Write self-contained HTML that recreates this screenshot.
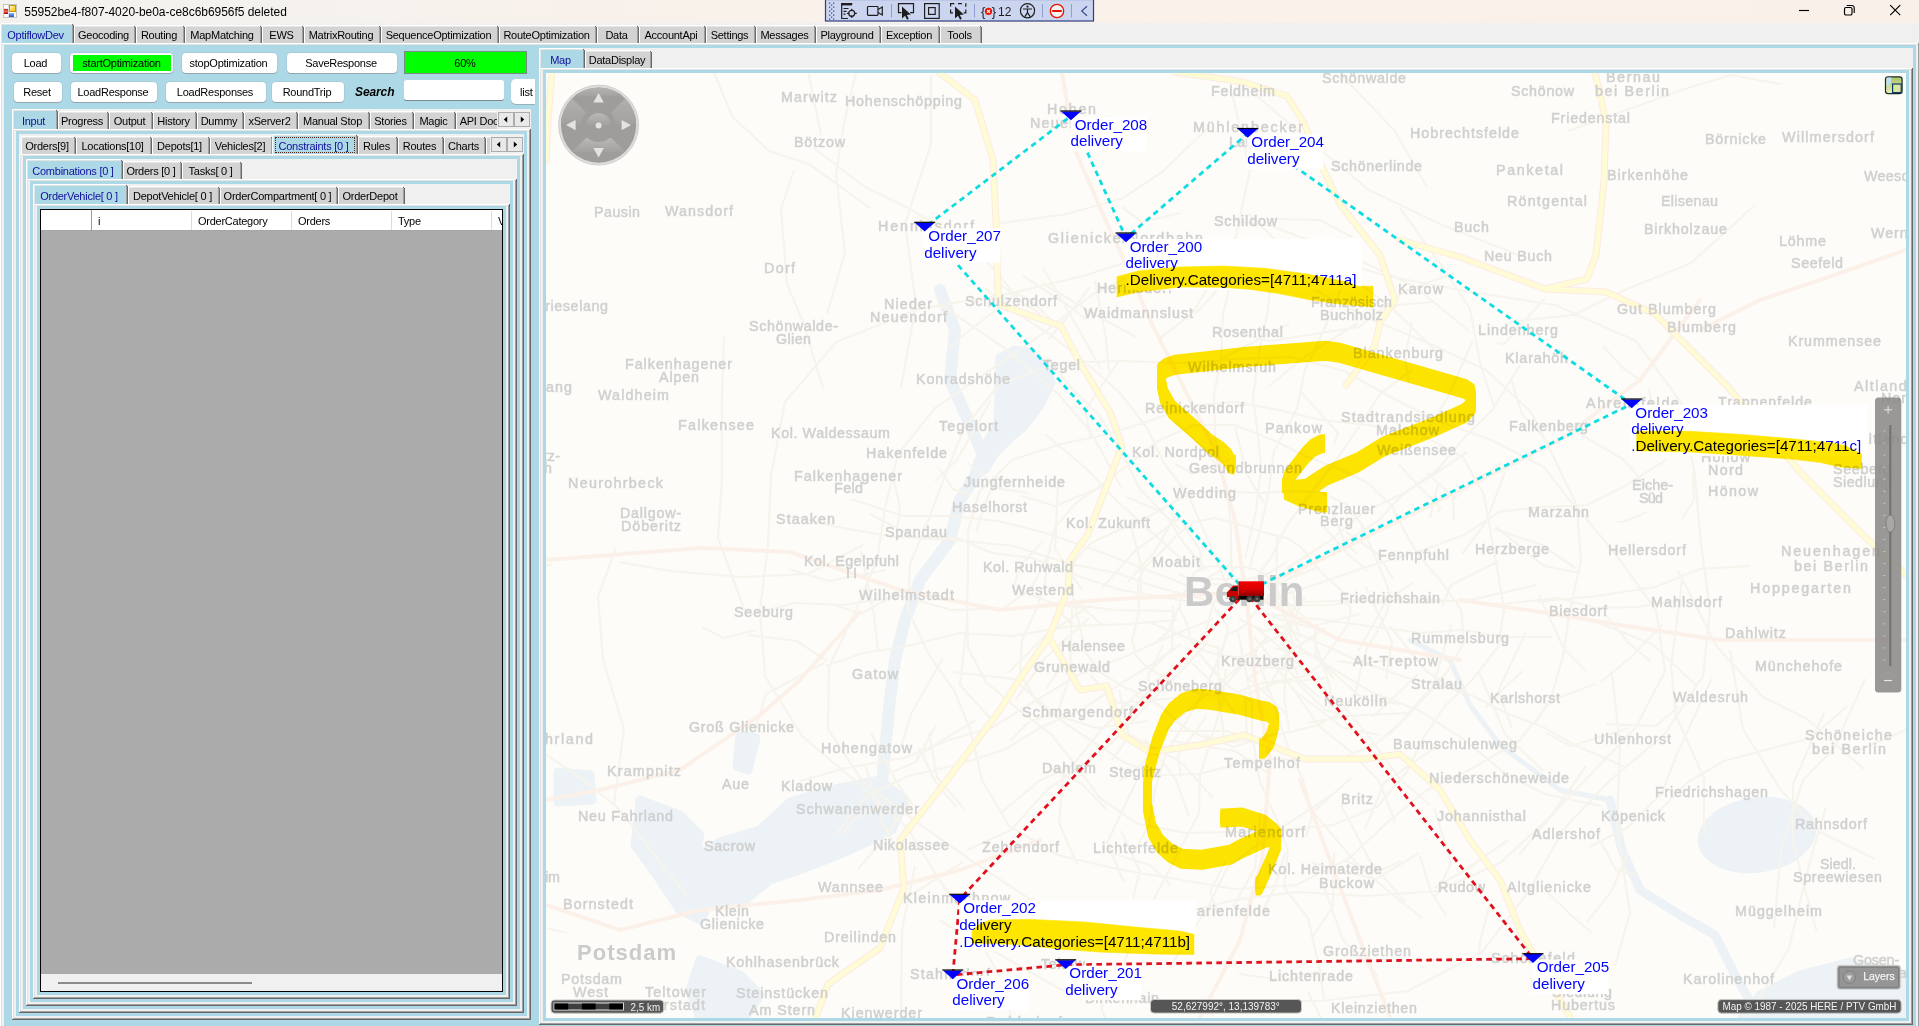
<!DOCTYPE html><html><head><meta charset="utf-8"><title>OptiflowDev</title><style>html,body{margin:0;padding:0}
body{width:1919px;height:1026px;overflow:hidden;position:relative;background:#f0f0f0;font-family:"Liberation Sans",sans-serif;font-size:11px;letter-spacing:-0.25px;color:#000}
.a{position:absolute}
svg text{letter-spacing:0}
</style></head><body><div class="a" style="left:0;top:0;width:1919px;height:23px;background:linear-gradient(90deg,#f3f2ee 0%,#f4f2ee 12%,#f8f1eb 30%,#faf1ea 55%,#f9f0ea 100%)"></div><svg class="a" style="left:0;top:0" width="40" height="23" viewBox="0 0 40 23"><rect x="3.5" y="4.5" width="13" height="13" fill="#fdfdfd" stroke="#c4c4c4"/><line x1="8.5" y1="5" x2="8.5" y2="17" stroke="#d6dbe2"/><line x1="4" y1="8.5" x2="16" y2="8.5" stroke="#e3e6ea"/><line x1="4" y1="13.5" x2="16" y2="13.5" stroke="#e3e6ea"/><defs><linearGradient id="gy" x1="0" y1="0" x2="1" y2="1"><stop offset="0" stop-color="#fff3c0"/><stop offset="1" stop-color="#ffc400"/></linearGradient><linearGradient id="gr" x1="0" y1="0" x2="0" y2="1"><stop offset="0" stop-color="#d01800"/><stop offset=".5" stop-color="#f06a60"/><stop offset="1" stop-color="#8a0000"/></linearGradient><linearGradient id="gb" x1="0" y1="0" x2="0" y2="1"><stop offset="0" stop-color="#8fb8ff"/><stop offset="1" stop-color="#1e50c0"/></linearGradient></defs><rect x="9" y="5" width="7" height="7" fill="#c89600"/><rect x="10" y="6" width="5" height="5" fill="url(#gy)"/><rect x="4" y="9" width="4" height="5" fill="url(#gr)"/><rect x="9" y="13" width="5" height="4" fill="url(#gb)"/></svg><div class="a" style="left:24.3px;top:4.04px;line-height:16px;font-size:12px;color:#000;white-space:pre;letter-spacing:-0.04px;">55952be4-f807-4020-be0a-ce8c6b6956f5 deleted</div><svg class="a" style="left:1780px;top:0" width="139" height="23" viewBox="1780 0 139 23" fill="none" stroke="#000" stroke-width="1.15"><line x1="1799" y1="10.5" x2="1809" y2="10.5"/><rect x="1844.5" y="7.5" width="7.5" height="7.5" rx="1.6"/><path d="M1846.7 5.5h5.2a2.3 2.3 0 0 1 2.3 2.3v5.2"/><path d="M1890.2 5.2l10 10M1900.2 5.2l-10 10"/></svg><svg class="a" style="left:820px;top:0" width="280" height="24" viewBox="820 0 280 24"><rect x="825.5" y="-0.5" width="268" height="21.5" fill="#ccd5f0" stroke="#2c3e84" stroke-width="1.2"/><rect x="829" y="2.5" width="1.3" height="1.3" fill="#3d4f9a"/><rect x="833" y="2.5" width="1.3" height="1.3" fill="#3d4f9a"/><rect x="831" y="4.5" width="1.3" height="1.3" fill="#3d4f9a"/><rect x="829" y="6.5" width="1.3" height="1.3" fill="#3d4f9a"/><rect x="833" y="6.5" width="1.3" height="1.3" fill="#3d4f9a"/><rect x="831" y="8.5" width="1.3" height="1.3" fill="#3d4f9a"/><rect x="829" y="10.5" width="1.3" height="1.3" fill="#3d4f9a"/><rect x="833" y="10.5" width="1.3" height="1.3" fill="#3d4f9a"/><rect x="831" y="12.5" width="1.3" height="1.3" fill="#3d4f9a"/><rect x="829" y="14.5" width="1.3" height="1.3" fill="#3d4f9a"/><rect x="833" y="14.5" width="1.3" height="1.3" fill="#3d4f9a"/><rect x="831" y="16.5" width="1.3" height="1.3" fill="#3d4f9a"/><rect x="829" y="18.5" width="1.3" height="1.3" fill="#3d4f9a"/><rect x="833" y="18.5" width="1.3" height="1.3" fill="#3d4f9a"/><g fill="none" stroke="#1e1e1e" stroke-width="1.2"><path d="M848 18.5H841.7V3.5h10.6"/><rect x="841.5" y="3.2" width="10.6" height="2.2" fill="#1e1e1e" stroke="none"/><path d="M843.5 8.5h5M843.5 11.3h3M843.5 14.2h2"/><circle cx="851.7" cy="13.3" r="3"/><path d="M851.7 8.7v2.4M851.7 15.5v2.6M847 13.3h2.4M854.2 13.3h2.6"/></g><g fill="none" stroke="#1e1e1e" stroke-width="1.2"><rect x="867.5" y="6.5" width="10.5" height="8.8" rx="0.8"/><path d="M878 9.5l4.3-2.4v7.8l-4.3-2.4"/></g><line x1="891.5" y1="4" x2="891.5" y2="17.5" stroke="#8fa0cf"/><g fill="none" stroke="#1e1e1e" stroke-width="1.2"><path d="M901.5 12.6h-3V3.6h15v9h-3.5"/></g><path d="M902 6.6v12l3-2.9 2.1 4 1.7-.9-2-3.9 4-.3z" fill="#1e1e1e"/><g fill="none" stroke="#1e1e1e" stroke-width="1.2"><rect x="924.6" y="3.6" width="14.6" height="14.8"/><rect x="928.6" y="7.6" width="6.6" height="6.8"/></g><g fill="none" stroke="#1e1e1e" stroke-width="1.2"><path d="M954.3 3.6h-3.7v3M950.6 9.5v3.4h2.4M958 3.6h4M965.6 3.6h.2v3.2M965.8 9.5v3.4h-2.2"/></g><path d="M955 6.6v12l3-2.9 2.1 4 1.7-.9-2-3.9 4-.3z" fill="#1e1e1e"/><line x1="974.5" y1="4" x2="974.5" y2="17.5" stroke="#8fa0cf"/><text x="981" y="15.6" font-family="Liberation Sans" font-size="13" fill="#1e1e1e">{</text><text x="991.8" y="15.6" font-family="Liberation Sans" font-size="13" fill="#1e1e1e">}</text><circle cx="988.5" cy="11.3" r="3.6" fill="#e51400"/><path d="M987 9.8l3 3M990 9.8l-3 3" stroke="#fff" stroke-width="1.1"/><text x="998" y="15.8" font-family="Liberation Sans" font-size="12" fill="#1e1e1e">12</text><g fill="none" stroke="#1e1e1e" stroke-width="1.2"><circle cx="1027.5" cy="10.7" r="7.1"/><path d="M1023 9h9M1027.5 9.2v3.6M1027.5 12.6l-2.6 4M1027.5 12.6l2.6 4"/></g><circle cx="1027.5" cy="6.7" r="1.1" fill="#1e1e1e"/><line x1="1042.5" y1="4" x2="1042.5" y2="17.5" stroke="#8fa0cf"/><circle cx="1057" cy="11" r="6.7" fill="#f3f3f3" stroke="#e51400" stroke-width="1.3"/><rect x="1052.2" y="10" width="9.6" height="2" fill="#e51400"/><line x1="1071.5" y1="4" x2="1071.5" y2="17.5" stroke="#8fa0cf"/><path d="M1087 6.3l-5.3 4.7 5.3 4.7" fill="none" stroke="#3a4c94" stroke-width="1.2"/></svg><div class="a" style="left:0px;top:23px;width:1919px;height:20px;background:#f0f0f0;"></div><div class="a" style="left:0px;top:43px;width:1919px;height:983px;background:#f0f0f0;"></div><div class="a" style="left:0px;top:43px;width:1919px;height:1px;background:#ffffff;"></div><div class="a" style="left:0px;top:43px;width:1px;height:983px;background:#ffffff;"></div><div class="a" style="left:1px;top:44px;width:1917px;height:1px;background:#e3e3e3;"></div><div class="a" style="left:1px;top:44px;width:1px;height:982px;background:#e3e3e3;"></div><div class="a" style="left:1918px;top:43px;width:1px;height:983px;background:#a0a0a0;"></div><div class="a" style="left:4px;top:45px;width:1912px;height:981px;background:#add8e6;"></div><div class="a" style="left:0px;top:23px;width:74px;height:20px;overflow:hidden"><div class="a" style="left:0px;top:0px;width:74px;height:20px;background:#add8e6;"></div><div class="a" style="left:1px;top:1px;width:72px;height:1px;background:#e3e3e3;"></div><div class="a" style="left:1px;top:1px;width:1px;height:19px;background:#e3e3e3;"></div><div class="a" style="left:1px;top:0px;width:71px;height:1px;background:#ffffff;"></div><div class="a" style="left:0px;top:1px;width:1px;height:19px;background:#ffffff;"></div><div class="a" style="left:0px;top:0px;width:1px;height:1px;background:#f0f0f0;"></div><div class="a" style="left:72px;top:0px;width:2px;height:1px;background:#f0f0f0;"></div><div class="a" style="left:72px;top:1px;width:1px;height:1px;background:#696969;"></div><div class="a" style="left:73px;top:1px;width:1px;height:1px;background:#f0f0f0;"></div><div class="a" style="left:72px;top:2px;width:1px;height:18px;background:#a0a0a0;"></div><div class="a" style="left:73px;top:2px;width:1px;height:18px;background:#696969;"></div><div class="a" style="left:-1px;top:4.69px;line-height:14px;font-size:11px;color:#10109c;white-space:pre;width:73px;text-align:center;">OptiflowDev</div></div><div class="a" style="left:74px;top:25px;width:62px;height:18px;overflow:hidden"><div class="a" style="left:0px;top:0px;width:62px;height:18px;background:#d3d3d3;"></div><div class="a" style="left:0px;top:1px;width:62px;height:1px;background:#e6e6e6;"></div><div class="a" style="left:1px;top:0px;width:59px;height:1px;background:#ffffff;"></div><div class="a" style="left:0px;top:1px;width:1px;height:17px;background:#ffffff;"></div><div class="a" style="left:0px;top:0px;width:1px;height:1px;background:#f0f0f0;"></div><div class="a" style="left:60px;top:0px;width:2px;height:1px;background:#f0f0f0;"></div><div class="a" style="left:60px;top:1px;width:1px;height:1px;background:#696969;"></div><div class="a" style="left:61px;top:1px;width:1px;height:1px;background:#f0f0f0;"></div><div class="a" style="left:60px;top:2px;width:1px;height:16px;background:#a0a0a0;"></div><div class="a" style="left:61px;top:2px;width:1px;height:16px;background:#696969;"></div><div class="a" style="left:-1px;top:2.69px;line-height:14px;font-size:11px;color:#000;white-space:pre;width:61px;text-align:center;">Geocoding</div></div><div class="a" style="left:136px;top:25px;width:49px;height:18px;overflow:hidden"><div class="a" style="left:0px;top:0px;width:49px;height:18px;background:#d3d3d3;"></div><div class="a" style="left:0px;top:1px;width:49px;height:1px;background:#e6e6e6;"></div><div class="a" style="left:1px;top:0px;width:46px;height:1px;background:#ffffff;"></div><div class="a" style="left:0px;top:1px;width:1px;height:17px;background:#ffffff;"></div><div class="a" style="left:0px;top:0px;width:1px;height:1px;background:#f0f0f0;"></div><div class="a" style="left:47px;top:0px;width:2px;height:1px;background:#f0f0f0;"></div><div class="a" style="left:47px;top:1px;width:1px;height:1px;background:#696969;"></div><div class="a" style="left:48px;top:1px;width:1px;height:1px;background:#f0f0f0;"></div><div class="a" style="left:47px;top:2px;width:1px;height:16px;background:#a0a0a0;"></div><div class="a" style="left:48px;top:2px;width:1px;height:16px;background:#696969;"></div><div class="a" style="left:-1px;top:2.69px;line-height:14px;font-size:11px;color:#000;white-space:pre;width:48px;text-align:center;">Routing</div></div><div class="a" style="left:185px;top:25px;width:77px;height:18px;overflow:hidden"><div class="a" style="left:0px;top:0px;width:77px;height:18px;background:#d3d3d3;"></div><div class="a" style="left:0px;top:1px;width:77px;height:1px;background:#e6e6e6;"></div><div class="a" style="left:1px;top:0px;width:74px;height:1px;background:#ffffff;"></div><div class="a" style="left:0px;top:1px;width:1px;height:17px;background:#ffffff;"></div><div class="a" style="left:0px;top:0px;width:1px;height:1px;background:#f0f0f0;"></div><div class="a" style="left:75px;top:0px;width:2px;height:1px;background:#f0f0f0;"></div><div class="a" style="left:75px;top:1px;width:1px;height:1px;background:#696969;"></div><div class="a" style="left:76px;top:1px;width:1px;height:1px;background:#f0f0f0;"></div><div class="a" style="left:75px;top:2px;width:1px;height:16px;background:#a0a0a0;"></div><div class="a" style="left:76px;top:2px;width:1px;height:16px;background:#696969;"></div><div class="a" style="left:-1px;top:2.69px;line-height:14px;font-size:11px;color:#000;white-space:pre;width:76px;text-align:center;">MapMatching</div></div><div class="a" style="left:262px;top:25px;width:42px;height:18px;overflow:hidden"><div class="a" style="left:0px;top:0px;width:42px;height:18px;background:#d3d3d3;"></div><div class="a" style="left:0px;top:1px;width:42px;height:1px;background:#e6e6e6;"></div><div class="a" style="left:1px;top:0px;width:39px;height:1px;background:#ffffff;"></div><div class="a" style="left:0px;top:1px;width:1px;height:17px;background:#ffffff;"></div><div class="a" style="left:0px;top:0px;width:1px;height:1px;background:#f0f0f0;"></div><div class="a" style="left:40px;top:0px;width:2px;height:1px;background:#f0f0f0;"></div><div class="a" style="left:40px;top:1px;width:1px;height:1px;background:#696969;"></div><div class="a" style="left:41px;top:1px;width:1px;height:1px;background:#f0f0f0;"></div><div class="a" style="left:40px;top:2px;width:1px;height:16px;background:#a0a0a0;"></div><div class="a" style="left:41px;top:2px;width:1px;height:16px;background:#696969;"></div><div class="a" style="left:-1px;top:2.69px;line-height:14px;font-size:11px;color:#000;white-space:pre;width:41px;text-align:center;">EWS</div></div><div class="a" style="left:304px;top:25px;width:77px;height:18px;overflow:hidden"><div class="a" style="left:0px;top:0px;width:77px;height:18px;background:#d3d3d3;"></div><div class="a" style="left:0px;top:1px;width:77px;height:1px;background:#e6e6e6;"></div><div class="a" style="left:1px;top:0px;width:74px;height:1px;background:#ffffff;"></div><div class="a" style="left:0px;top:1px;width:1px;height:17px;background:#ffffff;"></div><div class="a" style="left:0px;top:0px;width:1px;height:1px;background:#f0f0f0;"></div><div class="a" style="left:75px;top:0px;width:2px;height:1px;background:#f0f0f0;"></div><div class="a" style="left:75px;top:1px;width:1px;height:1px;background:#696969;"></div><div class="a" style="left:76px;top:1px;width:1px;height:1px;background:#f0f0f0;"></div><div class="a" style="left:75px;top:2px;width:1px;height:16px;background:#a0a0a0;"></div><div class="a" style="left:76px;top:2px;width:1px;height:16px;background:#696969;"></div><div class="a" style="left:-1px;top:2.69px;line-height:14px;font-size:11px;color:#000;white-space:pre;width:76px;text-align:center;">MatrixRouting</div></div><div class="a" style="left:381px;top:25px;width:118px;height:18px;overflow:hidden"><div class="a" style="left:0px;top:0px;width:118px;height:18px;background:#d3d3d3;"></div><div class="a" style="left:0px;top:1px;width:118px;height:1px;background:#e6e6e6;"></div><div class="a" style="left:1px;top:0px;width:115px;height:1px;background:#ffffff;"></div><div class="a" style="left:0px;top:1px;width:1px;height:17px;background:#ffffff;"></div><div class="a" style="left:0px;top:0px;width:1px;height:1px;background:#f0f0f0;"></div><div class="a" style="left:116px;top:0px;width:2px;height:1px;background:#f0f0f0;"></div><div class="a" style="left:116px;top:1px;width:1px;height:1px;background:#696969;"></div><div class="a" style="left:117px;top:1px;width:1px;height:1px;background:#f0f0f0;"></div><div class="a" style="left:116px;top:2px;width:1px;height:16px;background:#a0a0a0;"></div><div class="a" style="left:117px;top:2px;width:1px;height:16px;background:#696969;"></div><div class="a" style="left:-1px;top:2.69px;line-height:14px;font-size:11px;color:#000;white-space:pre;width:117px;text-align:center;">SequenceOptimization</div></div><div class="a" style="left:499px;top:25px;width:98px;height:18px;overflow:hidden"><div class="a" style="left:0px;top:0px;width:98px;height:18px;background:#d3d3d3;"></div><div class="a" style="left:0px;top:1px;width:98px;height:1px;background:#e6e6e6;"></div><div class="a" style="left:1px;top:0px;width:95px;height:1px;background:#ffffff;"></div><div class="a" style="left:0px;top:1px;width:1px;height:17px;background:#ffffff;"></div><div class="a" style="left:0px;top:0px;width:1px;height:1px;background:#f0f0f0;"></div><div class="a" style="left:96px;top:0px;width:2px;height:1px;background:#f0f0f0;"></div><div class="a" style="left:96px;top:1px;width:1px;height:1px;background:#696969;"></div><div class="a" style="left:97px;top:1px;width:1px;height:1px;background:#f0f0f0;"></div><div class="a" style="left:96px;top:2px;width:1px;height:16px;background:#a0a0a0;"></div><div class="a" style="left:97px;top:2px;width:1px;height:16px;background:#696969;"></div><div class="a" style="left:-1px;top:2.69px;line-height:14px;font-size:11px;color:#000;white-space:pre;width:97px;text-align:center;">RouteOptimization</div></div><div class="a" style="left:597px;top:25px;width:42px;height:18px;overflow:hidden"><div class="a" style="left:0px;top:0px;width:42px;height:18px;background:#d3d3d3;"></div><div class="a" style="left:0px;top:1px;width:42px;height:1px;background:#e6e6e6;"></div><div class="a" style="left:1px;top:0px;width:39px;height:1px;background:#ffffff;"></div><div class="a" style="left:0px;top:1px;width:1px;height:17px;background:#ffffff;"></div><div class="a" style="left:0px;top:0px;width:1px;height:1px;background:#f0f0f0;"></div><div class="a" style="left:40px;top:0px;width:2px;height:1px;background:#f0f0f0;"></div><div class="a" style="left:40px;top:1px;width:1px;height:1px;background:#696969;"></div><div class="a" style="left:41px;top:1px;width:1px;height:1px;background:#f0f0f0;"></div><div class="a" style="left:40px;top:2px;width:1px;height:16px;background:#a0a0a0;"></div><div class="a" style="left:41px;top:2px;width:1px;height:16px;background:#696969;"></div><div class="a" style="left:-1px;top:2.69px;line-height:14px;font-size:11px;color:#000;white-space:pre;width:41px;text-align:center;">Data</div></div><div class="a" style="left:639px;top:25px;width:67px;height:18px;overflow:hidden"><div class="a" style="left:0px;top:0px;width:67px;height:18px;background:#d3d3d3;"></div><div class="a" style="left:0px;top:1px;width:67px;height:1px;background:#e6e6e6;"></div><div class="a" style="left:1px;top:0px;width:64px;height:1px;background:#ffffff;"></div><div class="a" style="left:0px;top:1px;width:1px;height:17px;background:#ffffff;"></div><div class="a" style="left:0px;top:0px;width:1px;height:1px;background:#f0f0f0;"></div><div class="a" style="left:65px;top:0px;width:2px;height:1px;background:#f0f0f0;"></div><div class="a" style="left:65px;top:1px;width:1px;height:1px;background:#696969;"></div><div class="a" style="left:66px;top:1px;width:1px;height:1px;background:#f0f0f0;"></div><div class="a" style="left:65px;top:2px;width:1px;height:16px;background:#a0a0a0;"></div><div class="a" style="left:66px;top:2px;width:1px;height:16px;background:#696969;"></div><div class="a" style="left:-1px;top:2.69px;line-height:14px;font-size:11px;color:#000;white-space:pre;width:66px;text-align:center;">AccountApi</div></div><div class="a" style="left:706px;top:25px;width:50px;height:18px;overflow:hidden"><div class="a" style="left:0px;top:0px;width:50px;height:18px;background:#d3d3d3;"></div><div class="a" style="left:0px;top:1px;width:50px;height:1px;background:#e6e6e6;"></div><div class="a" style="left:1px;top:0px;width:47px;height:1px;background:#ffffff;"></div><div class="a" style="left:0px;top:1px;width:1px;height:17px;background:#ffffff;"></div><div class="a" style="left:0px;top:0px;width:1px;height:1px;background:#f0f0f0;"></div><div class="a" style="left:48px;top:0px;width:2px;height:1px;background:#f0f0f0;"></div><div class="a" style="left:48px;top:1px;width:1px;height:1px;background:#696969;"></div><div class="a" style="left:49px;top:1px;width:1px;height:1px;background:#f0f0f0;"></div><div class="a" style="left:48px;top:2px;width:1px;height:16px;background:#a0a0a0;"></div><div class="a" style="left:49px;top:2px;width:1px;height:16px;background:#696969;"></div><div class="a" style="left:-1px;top:2.69px;line-height:14px;font-size:11px;color:#000;white-space:pre;width:49px;text-align:center;">Settings</div></div><div class="a" style="left:756px;top:25px;width:60px;height:18px;overflow:hidden"><div class="a" style="left:0px;top:0px;width:60px;height:18px;background:#d3d3d3;"></div><div class="a" style="left:0px;top:1px;width:60px;height:1px;background:#e6e6e6;"></div><div class="a" style="left:1px;top:0px;width:57px;height:1px;background:#ffffff;"></div><div class="a" style="left:0px;top:1px;width:1px;height:17px;background:#ffffff;"></div><div class="a" style="left:0px;top:0px;width:1px;height:1px;background:#f0f0f0;"></div><div class="a" style="left:58px;top:0px;width:2px;height:1px;background:#f0f0f0;"></div><div class="a" style="left:58px;top:1px;width:1px;height:1px;background:#696969;"></div><div class="a" style="left:59px;top:1px;width:1px;height:1px;background:#f0f0f0;"></div><div class="a" style="left:58px;top:2px;width:1px;height:16px;background:#a0a0a0;"></div><div class="a" style="left:59px;top:2px;width:1px;height:16px;background:#696969;"></div><div class="a" style="left:-1px;top:2.69px;line-height:14px;font-size:11px;color:#000;white-space:pre;width:59px;text-align:center;">Messages</div></div><div class="a" style="left:816px;top:25px;width:65px;height:18px;overflow:hidden"><div class="a" style="left:0px;top:0px;width:65px;height:18px;background:#d3d3d3;"></div><div class="a" style="left:0px;top:1px;width:65px;height:1px;background:#e6e6e6;"></div><div class="a" style="left:1px;top:0px;width:62px;height:1px;background:#ffffff;"></div><div class="a" style="left:0px;top:1px;width:1px;height:17px;background:#ffffff;"></div><div class="a" style="left:0px;top:0px;width:1px;height:1px;background:#f0f0f0;"></div><div class="a" style="left:63px;top:0px;width:2px;height:1px;background:#f0f0f0;"></div><div class="a" style="left:63px;top:1px;width:1px;height:1px;background:#696969;"></div><div class="a" style="left:64px;top:1px;width:1px;height:1px;background:#f0f0f0;"></div><div class="a" style="left:63px;top:2px;width:1px;height:16px;background:#a0a0a0;"></div><div class="a" style="left:64px;top:2px;width:1px;height:16px;background:#696969;"></div><div class="a" style="left:-1px;top:2.69px;line-height:14px;font-size:11px;color:#000;white-space:pre;width:64px;text-align:center;">Playground</div></div><div class="a" style="left:881px;top:25px;width:59px;height:18px;overflow:hidden"><div class="a" style="left:0px;top:0px;width:59px;height:18px;background:#d3d3d3;"></div><div class="a" style="left:0px;top:1px;width:59px;height:1px;background:#e6e6e6;"></div><div class="a" style="left:1px;top:0px;width:56px;height:1px;background:#ffffff;"></div><div class="a" style="left:0px;top:1px;width:1px;height:17px;background:#ffffff;"></div><div class="a" style="left:0px;top:0px;width:1px;height:1px;background:#f0f0f0;"></div><div class="a" style="left:57px;top:0px;width:2px;height:1px;background:#f0f0f0;"></div><div class="a" style="left:57px;top:1px;width:1px;height:1px;background:#696969;"></div><div class="a" style="left:58px;top:1px;width:1px;height:1px;background:#f0f0f0;"></div><div class="a" style="left:57px;top:2px;width:1px;height:16px;background:#a0a0a0;"></div><div class="a" style="left:58px;top:2px;width:1px;height:16px;background:#696969;"></div><div class="a" style="left:-1px;top:2.69px;line-height:14px;font-size:11px;color:#000;white-space:pre;width:58px;text-align:center;">Exception</div></div><div class="a" style="left:940px;top:25px;width:42px;height:18px;overflow:hidden"><div class="a" style="left:0px;top:0px;width:42px;height:18px;background:#d3d3d3;"></div><div class="a" style="left:0px;top:1px;width:42px;height:1px;background:#e6e6e6;"></div><div class="a" style="left:1px;top:0px;width:39px;height:1px;background:#ffffff;"></div><div class="a" style="left:0px;top:1px;width:1px;height:17px;background:#ffffff;"></div><div class="a" style="left:0px;top:0px;width:1px;height:1px;background:#f0f0f0;"></div><div class="a" style="left:40px;top:0px;width:2px;height:1px;background:#f0f0f0;"></div><div class="a" style="left:40px;top:1px;width:1px;height:1px;background:#696969;"></div><div class="a" style="left:41px;top:1px;width:1px;height:1px;background:#f0f0f0;"></div><div class="a" style="left:40px;top:2px;width:1px;height:16px;background:#a0a0a0;"></div><div class="a" style="left:41px;top:2px;width:1px;height:16px;background:#696969;"></div><div class="a" style="left:-1px;top:2.69px;line-height:14px;font-size:11px;color:#000;white-space:pre;width:41px;text-align:center;">Tools</div></div><div class="a" style="left:0;top:0;width:535px;height:1026px;overflow:hidden"><div class="a" style="left:12px;top:53px;width:49px;height:20px;background:#fff;border-radius:4px;box-shadow:0 1px 0 rgba(120,120,120,.45), 0 0 0 .5px rgba(150,170,180,.5)"></div><div class="a" style="left:11px;top:56.19px;line-height:14px;font-size:11px;color:#000;white-space:pre;width:49px;text-align:center;">Load</div><div class="a" style="left:70px;top:53px;width:103px;height:20px;background:#fff;border-radius:4px;box-shadow:0 1px 0 rgba(120,120,120,.45), 0 0 0 .5px rgba(150,170,180,.5)"></div><div class="a" style="left:69px;top:56.19px;line-height:14px;font-size:11px;color:#000;white-space:pre;width:103px;text-align:center;"></div><div class="a" style="left:73px;top:55px;width:98px;height:16px;background:#00ff00;"></div><div class="a" style="left:70px;top:55.69px;line-height:14px;font-size:11px;color:#000;white-space:pre;width:103px;text-align:center;">startOptimization</div><div class="a" style="left:182px;top:53px;width:95px;height:20px;background:#fff;border-radius:4px;box-shadow:0 1px 0 rgba(120,120,120,.45), 0 0 0 .5px rgba(150,170,180,.5)"></div><div class="a" style="left:181px;top:56.19px;line-height:14px;font-size:11px;color:#000;white-space:pre;width:95px;text-align:center;">stopOptimization</div><div class="a" style="left:287px;top:53px;width:110px;height:20px;background:#fff;border-radius:4px;box-shadow:0 1px 0 rgba(120,120,120,.45), 0 0 0 .5px rgba(150,170,180,.5)"></div><div class="a" style="left:286px;top:56.19px;line-height:14px;font-size:11px;color:#000;white-space:pre;width:110px;text-align:center;">SaveResponse</div><div class="a" style="left:404px;top:51px;width:123px;height:23px;background:#00ff00;border:1px solid #7b8a80;box-sizing:border-box"></div><div class="a" style="left:404px;top:55.69px;line-height:14px;font-size:11px;color:#000;white-space:pre;width:122px;text-align:center;">60%</div><div class="a" style="left:14px;top:82px;width:48px;height:20px;background:#fff;border-radius:4px;box-shadow:0 1px 0 rgba(120,120,120,.45), 0 0 0 .5px rgba(150,170,180,.5)"></div><div class="a" style="left:13px;top:85.19px;line-height:14px;font-size:11px;color:#000;white-space:pre;width:48px;text-align:center;">Reset</div><div class="a" style="left:71px;top:82px;width:86px;height:20px;background:#fff;border-radius:4px;box-shadow:0 1px 0 rgba(120,120,120,.45), 0 0 0 .5px rgba(150,170,180,.5)"></div><div class="a" style="left:70px;top:85.19px;line-height:14px;font-size:11px;color:#000;white-space:pre;width:86px;text-align:center;">LoadResponse</div><div class="a" style="left:166px;top:82px;width:100px;height:20px;background:#fff;border-radius:4px;box-shadow:0 1px 0 rgba(120,120,120,.45), 0 0 0 .5px rgba(150,170,180,.5)"></div><div class="a" style="left:165px;top:85.19px;line-height:14px;font-size:11px;color:#000;white-space:pre;width:100px;text-align:center;">LoadResponses</div><div class="a" style="left:272px;top:82px;width:72px;height:20px;background:#fff;border-radius:4px;box-shadow:0 1px 0 rgba(120,120,120,.45), 0 0 0 .5px rgba(150,170,180,.5)"></div><div class="a" style="left:271px;top:85.19px;line-height:14px;font-size:11px;color:#000;white-space:pre;width:72px;text-align:center;">RoundTrip</div><div class="a" style="left:355px;top:83.84px;line-height:16px;font-size:12px;color:#000;white-space:pre;font-weight:bold;font-style:italic;letter-spacing:-0.1px;">Search</div><div class="a" style="left:404px;top:80px;width:100px;height:20px;background:#fff;border-radius:2.5px;box-shadow:0 1px 0 rgba(90,90,90,.6)"></div><div class="a" style="left:511px;top:79px;width:40px;height:25px;background:#fff;border-radius:5px;box-shadow:0 1px 0 rgba(120,120,120,.4)"></div><div class="a" style="left:520px;top:85.19px;line-height:14px;font-size:11px;color:#000;white-space:pre;">list</div><div class="a" style="left:12px;top:109px;width:519px;height:20px;background:#f0f0f0;"></div><div class="a" style="left:12px;top:129px;width:519px;height:891px;background:#f0f0f0;"></div><div class="a" style="left:12px;top:129px;width:519px;height:1px;background:#ffffff;"></div><div class="a" style="left:12px;top:129px;width:1px;height:891px;background:#ffffff;"></div><div class="a" style="left:13px;top:130px;width:517px;height:1px;background:#e3e3e3;"></div><div class="a" style="left:13px;top:130px;width:1px;height:889px;background:#e3e3e3;"></div><div class="a" style="left:530px;top:129px;width:1px;height:891px;background:#696969;"></div><div class="a" style="left:12px;top:1019px;width:519px;height:1px;background:#696969;"></div><div class="a" style="left:529px;top:130px;width:1px;height:889px;background:#a0a0a0;"></div><div class="a" style="left:13px;top:1018px;width:517px;height:1px;background:#a0a0a0;"></div><div class="a" style="left:16px;top:131px;width:511px;height:885px;background:#add8e6;"></div><div class="a" style="left:12px;top:109px;width:46px;height:20px;overflow:hidden"><div class="a" style="left:0px;top:0px;width:46px;height:20px;background:#add8e6;"></div><div class="a" style="left:1px;top:1px;width:44px;height:1px;background:#e3e3e3;"></div><div class="a" style="left:1px;top:1px;width:1px;height:19px;background:#e3e3e3;"></div><div class="a" style="left:1px;top:0px;width:43px;height:1px;background:#ffffff;"></div><div class="a" style="left:0px;top:1px;width:1px;height:19px;background:#ffffff;"></div><div class="a" style="left:0px;top:0px;width:1px;height:1px;background:#f0f0f0;"></div><div class="a" style="left:44px;top:0px;width:2px;height:1px;background:#f0f0f0;"></div><div class="a" style="left:44px;top:1px;width:1px;height:1px;background:#696969;"></div><div class="a" style="left:45px;top:1px;width:1px;height:1px;background:#f0f0f0;"></div><div class="a" style="left:44px;top:2px;width:1px;height:18px;background:#a0a0a0;"></div><div class="a" style="left:45px;top:2px;width:1px;height:18px;background:#696969;"></div><div class="a" style="left:-1px;top:4.69px;line-height:14px;font-size:11px;color:#10109c;white-space:pre;width:45px;text-align:center;">Input</div></div><div class="a" style="left:58px;top:111px;width:51px;height:18px;overflow:hidden"><div class="a" style="left:0px;top:0px;width:51px;height:18px;background:#d3d3d3;"></div><div class="a" style="left:0px;top:1px;width:51px;height:1px;background:#e6e6e6;"></div><div class="a" style="left:1px;top:0px;width:48px;height:1px;background:#ffffff;"></div><div class="a" style="left:0px;top:1px;width:1px;height:17px;background:#ffffff;"></div><div class="a" style="left:0px;top:0px;width:1px;height:1px;background:#f0f0f0;"></div><div class="a" style="left:49px;top:0px;width:2px;height:1px;background:#f0f0f0;"></div><div class="a" style="left:49px;top:1px;width:1px;height:1px;background:#696969;"></div><div class="a" style="left:50px;top:1px;width:1px;height:1px;background:#f0f0f0;"></div><div class="a" style="left:49px;top:2px;width:1px;height:16px;background:#a0a0a0;"></div><div class="a" style="left:50px;top:2px;width:1px;height:16px;background:#696969;"></div><div class="a" style="left:-1px;top:2.69px;line-height:14px;font-size:11px;color:#000;white-space:pre;width:50px;text-align:center;">Progress</div></div><div class="a" style="left:109px;top:111px;width:44px;height:18px;overflow:hidden"><div class="a" style="left:0px;top:0px;width:44px;height:18px;background:#d3d3d3;"></div><div class="a" style="left:0px;top:1px;width:44px;height:1px;background:#e6e6e6;"></div><div class="a" style="left:1px;top:0px;width:41px;height:1px;background:#ffffff;"></div><div class="a" style="left:0px;top:1px;width:1px;height:17px;background:#ffffff;"></div><div class="a" style="left:0px;top:0px;width:1px;height:1px;background:#f0f0f0;"></div><div class="a" style="left:42px;top:0px;width:2px;height:1px;background:#f0f0f0;"></div><div class="a" style="left:42px;top:1px;width:1px;height:1px;background:#696969;"></div><div class="a" style="left:43px;top:1px;width:1px;height:1px;background:#f0f0f0;"></div><div class="a" style="left:42px;top:2px;width:1px;height:16px;background:#a0a0a0;"></div><div class="a" style="left:43px;top:2px;width:1px;height:16px;background:#696969;"></div><div class="a" style="left:-1px;top:2.69px;line-height:14px;font-size:11px;color:#000;white-space:pre;width:43px;text-align:center;">Output</div></div><div class="a" style="left:153px;top:111px;width:44px;height:18px;overflow:hidden"><div class="a" style="left:0px;top:0px;width:44px;height:18px;background:#d3d3d3;"></div><div class="a" style="left:0px;top:1px;width:44px;height:1px;background:#e6e6e6;"></div><div class="a" style="left:1px;top:0px;width:41px;height:1px;background:#ffffff;"></div><div class="a" style="left:0px;top:1px;width:1px;height:17px;background:#ffffff;"></div><div class="a" style="left:0px;top:0px;width:1px;height:1px;background:#f0f0f0;"></div><div class="a" style="left:42px;top:0px;width:2px;height:1px;background:#f0f0f0;"></div><div class="a" style="left:42px;top:1px;width:1px;height:1px;background:#696969;"></div><div class="a" style="left:43px;top:1px;width:1px;height:1px;background:#f0f0f0;"></div><div class="a" style="left:42px;top:2px;width:1px;height:16px;background:#a0a0a0;"></div><div class="a" style="left:43px;top:2px;width:1px;height:16px;background:#696969;"></div><div class="a" style="left:-1px;top:2.69px;line-height:14px;font-size:11px;color:#000;white-space:pre;width:43px;text-align:center;">History</div></div><div class="a" style="left:197px;top:111px;width:47px;height:18px;overflow:hidden"><div class="a" style="left:0px;top:0px;width:47px;height:18px;background:#d3d3d3;"></div><div class="a" style="left:0px;top:1px;width:47px;height:1px;background:#e6e6e6;"></div><div class="a" style="left:1px;top:0px;width:44px;height:1px;background:#ffffff;"></div><div class="a" style="left:0px;top:1px;width:1px;height:17px;background:#ffffff;"></div><div class="a" style="left:0px;top:0px;width:1px;height:1px;background:#f0f0f0;"></div><div class="a" style="left:45px;top:0px;width:2px;height:1px;background:#f0f0f0;"></div><div class="a" style="left:45px;top:1px;width:1px;height:1px;background:#696969;"></div><div class="a" style="left:46px;top:1px;width:1px;height:1px;background:#f0f0f0;"></div><div class="a" style="left:45px;top:2px;width:1px;height:16px;background:#a0a0a0;"></div><div class="a" style="left:46px;top:2px;width:1px;height:16px;background:#696969;"></div><div class="a" style="left:-1px;top:2.69px;line-height:14px;font-size:11px;color:#000;white-space:pre;width:46px;text-align:center;">Dummy</div></div><div class="a" style="left:244px;top:111px;width:54px;height:18px;overflow:hidden"><div class="a" style="left:0px;top:0px;width:54px;height:18px;background:#d3d3d3;"></div><div class="a" style="left:0px;top:1px;width:54px;height:1px;background:#e6e6e6;"></div><div class="a" style="left:1px;top:0px;width:51px;height:1px;background:#ffffff;"></div><div class="a" style="left:0px;top:1px;width:1px;height:17px;background:#ffffff;"></div><div class="a" style="left:0px;top:0px;width:1px;height:1px;background:#f0f0f0;"></div><div class="a" style="left:52px;top:0px;width:2px;height:1px;background:#f0f0f0;"></div><div class="a" style="left:52px;top:1px;width:1px;height:1px;background:#696969;"></div><div class="a" style="left:53px;top:1px;width:1px;height:1px;background:#f0f0f0;"></div><div class="a" style="left:52px;top:2px;width:1px;height:16px;background:#a0a0a0;"></div><div class="a" style="left:53px;top:2px;width:1px;height:16px;background:#696969;"></div><div class="a" style="left:-1px;top:2.69px;line-height:14px;font-size:11px;color:#000;white-space:pre;width:53px;text-align:center;">xServer2</div></div><div class="a" style="left:298px;top:111px;width:72px;height:18px;overflow:hidden"><div class="a" style="left:0px;top:0px;width:72px;height:18px;background:#d3d3d3;"></div><div class="a" style="left:0px;top:1px;width:72px;height:1px;background:#e6e6e6;"></div><div class="a" style="left:1px;top:0px;width:69px;height:1px;background:#ffffff;"></div><div class="a" style="left:0px;top:1px;width:1px;height:17px;background:#ffffff;"></div><div class="a" style="left:0px;top:0px;width:1px;height:1px;background:#f0f0f0;"></div><div class="a" style="left:70px;top:0px;width:2px;height:1px;background:#f0f0f0;"></div><div class="a" style="left:70px;top:1px;width:1px;height:1px;background:#696969;"></div><div class="a" style="left:71px;top:1px;width:1px;height:1px;background:#f0f0f0;"></div><div class="a" style="left:70px;top:2px;width:1px;height:16px;background:#a0a0a0;"></div><div class="a" style="left:71px;top:2px;width:1px;height:16px;background:#696969;"></div><div class="a" style="left:-1px;top:2.69px;line-height:14px;font-size:11px;color:#000;white-space:pre;width:71px;text-align:center;">Manual Stop</div></div><div class="a" style="left:370px;top:111px;width:44px;height:18px;overflow:hidden"><div class="a" style="left:0px;top:0px;width:44px;height:18px;background:#d3d3d3;"></div><div class="a" style="left:0px;top:1px;width:44px;height:1px;background:#e6e6e6;"></div><div class="a" style="left:1px;top:0px;width:41px;height:1px;background:#ffffff;"></div><div class="a" style="left:0px;top:1px;width:1px;height:17px;background:#ffffff;"></div><div class="a" style="left:0px;top:0px;width:1px;height:1px;background:#f0f0f0;"></div><div class="a" style="left:42px;top:0px;width:2px;height:1px;background:#f0f0f0;"></div><div class="a" style="left:42px;top:1px;width:1px;height:1px;background:#696969;"></div><div class="a" style="left:43px;top:1px;width:1px;height:1px;background:#f0f0f0;"></div><div class="a" style="left:42px;top:2px;width:1px;height:16px;background:#a0a0a0;"></div><div class="a" style="left:43px;top:2px;width:1px;height:16px;background:#696969;"></div><div class="a" style="left:-1px;top:2.69px;line-height:14px;font-size:11px;color:#000;white-space:pre;width:43px;text-align:center;">Stories</div></div><div class="a" style="left:414px;top:111px;width:42px;height:18px;overflow:hidden"><div class="a" style="left:0px;top:0px;width:42px;height:18px;background:#d3d3d3;"></div><div class="a" style="left:0px;top:1px;width:42px;height:1px;background:#e6e6e6;"></div><div class="a" style="left:1px;top:0px;width:39px;height:1px;background:#ffffff;"></div><div class="a" style="left:0px;top:1px;width:1px;height:17px;background:#ffffff;"></div><div class="a" style="left:0px;top:0px;width:1px;height:1px;background:#f0f0f0;"></div><div class="a" style="left:40px;top:0px;width:2px;height:1px;background:#f0f0f0;"></div><div class="a" style="left:40px;top:1px;width:1px;height:1px;background:#696969;"></div><div class="a" style="left:41px;top:1px;width:1px;height:1px;background:#f0f0f0;"></div><div class="a" style="left:40px;top:2px;width:1px;height:16px;background:#a0a0a0;"></div><div class="a" style="left:41px;top:2px;width:1px;height:16px;background:#696969;"></div><div class="a" style="left:-1px;top:2.69px;line-height:14px;font-size:11px;color:#000;white-space:pre;width:41px;text-align:center;">Magic</div></div><div class="a" style="left:456px;top:111px;width:41px;height:18px;overflow:hidden"><div class="a" style="left:0px;top:0px;width:49px;height:18px;background:#d3d3d3;"></div><div class="a" style="left:0px;top:1px;width:49px;height:1px;background:#e6e6e6;"></div><div class="a" style="left:1px;top:0px;width:46px;height:1px;background:#ffffff;"></div><div class="a" style="left:0px;top:1px;width:1px;height:17px;background:#ffffff;"></div><div class="a" style="left:0px;top:0px;width:1px;height:1px;background:#f0f0f0;"></div><div class="a" style="left:47px;top:0px;width:2px;height:1px;background:#f0f0f0;"></div><div class="a" style="left:47px;top:1px;width:1px;height:1px;background:#696969;"></div><div class="a" style="left:48px;top:1px;width:1px;height:1px;background:#f0f0f0;"></div><div class="a" style="left:47px;top:2px;width:1px;height:16px;background:#a0a0a0;"></div><div class="a" style="left:48px;top:2px;width:1px;height:16px;background:#696969;"></div><div class="a" style="left:-1px;top:2.69px;line-height:14px;font-size:11px;color:#000;white-space:pre;width:48px;text-align:center;">API Doc</div></div><div class="a" style="left:498px;top:112px;width:16px;height:15px;background:#e9e9e9;border:1px solid #adadad;box-sizing:border-box"></div><svg class="a" style="left:0;top:0" width="1919" height="1026"><polygon points="507.2,116.5 507.2,122.5 503.8,119.5" fill="#000"/></svg><div class="a" style="left:514px;top:112px;width:16px;height:15px;background:#e9e9e9;border:1px solid #adadad;box-sizing:border-box"></div><svg class="a" style="left:0;top:0" width="1919" height="1026"><polygon points="520.8,116.5 520.8,122.5 524.2,119.5" fill="#000"/></svg><div class="a" style="left:19px;top:134px;width:505px;height:20px;background:#f0f0f0;"></div><div class="a" style="left:19px;top:154px;width:505px;height:859px;background:#f0f0f0;"></div><div class="a" style="left:19px;top:154px;width:505px;height:1px;background:#ffffff;"></div><div class="a" style="left:19px;top:154px;width:1px;height:859px;background:#ffffff;"></div><div class="a" style="left:20px;top:155px;width:503px;height:1px;background:#e3e3e3;"></div><div class="a" style="left:20px;top:155px;width:1px;height:857px;background:#e3e3e3;"></div><div class="a" style="left:523px;top:154px;width:1px;height:859px;background:#696969;"></div><div class="a" style="left:19px;top:1012px;width:505px;height:1px;background:#696969;"></div><div class="a" style="left:522px;top:155px;width:1px;height:857px;background:#a0a0a0;"></div><div class="a" style="left:20px;top:1011px;width:503px;height:1px;background:#a0a0a0;"></div><div class="a" style="left:23px;top:156px;width:497px;height:853px;background:#add8e6;"></div><div class="a" style="left:21px;top:136px;width:55px;height:18px;overflow:hidden"><div class="a" style="left:0px;top:0px;width:55px;height:18px;background:#d3d3d3;"></div><div class="a" style="left:0px;top:1px;width:55px;height:1px;background:#e6e6e6;"></div><div class="a" style="left:1px;top:0px;width:52px;height:1px;background:#ffffff;"></div><div class="a" style="left:0px;top:1px;width:1px;height:17px;background:#ffffff;"></div><div class="a" style="left:0px;top:0px;width:1px;height:1px;background:#f0f0f0;"></div><div class="a" style="left:53px;top:0px;width:2px;height:1px;background:#f0f0f0;"></div><div class="a" style="left:53px;top:1px;width:1px;height:1px;background:#696969;"></div><div class="a" style="left:54px;top:1px;width:1px;height:1px;background:#f0f0f0;"></div><div class="a" style="left:53px;top:2px;width:1px;height:16px;background:#a0a0a0;"></div><div class="a" style="left:54px;top:2px;width:1px;height:16px;background:#696969;"></div><div class="a" style="left:-1px;top:2.69px;line-height:14px;font-size:11px;color:#000;white-space:pre;width:54px;text-align:center;">Orders[9]</div></div><div class="a" style="left:76px;top:136px;width:76px;height:18px;overflow:hidden"><div class="a" style="left:0px;top:0px;width:76px;height:18px;background:#d3d3d3;"></div><div class="a" style="left:0px;top:1px;width:76px;height:1px;background:#e6e6e6;"></div><div class="a" style="left:1px;top:0px;width:73px;height:1px;background:#ffffff;"></div><div class="a" style="left:0px;top:1px;width:1px;height:17px;background:#ffffff;"></div><div class="a" style="left:0px;top:0px;width:1px;height:1px;background:#f0f0f0;"></div><div class="a" style="left:74px;top:0px;width:2px;height:1px;background:#f0f0f0;"></div><div class="a" style="left:74px;top:1px;width:1px;height:1px;background:#696969;"></div><div class="a" style="left:75px;top:1px;width:1px;height:1px;background:#f0f0f0;"></div><div class="a" style="left:74px;top:2px;width:1px;height:16px;background:#a0a0a0;"></div><div class="a" style="left:75px;top:2px;width:1px;height:16px;background:#696969;"></div><div class="a" style="left:-1px;top:2.69px;line-height:14px;font-size:11px;color:#000;white-space:pre;width:75px;text-align:center;">Locations[10]</div></div><div class="a" style="left:152px;top:136px;width:58px;height:18px;overflow:hidden"><div class="a" style="left:0px;top:0px;width:58px;height:18px;background:#d3d3d3;"></div><div class="a" style="left:0px;top:1px;width:58px;height:1px;background:#e6e6e6;"></div><div class="a" style="left:1px;top:0px;width:55px;height:1px;background:#ffffff;"></div><div class="a" style="left:0px;top:1px;width:1px;height:17px;background:#ffffff;"></div><div class="a" style="left:0px;top:0px;width:1px;height:1px;background:#f0f0f0;"></div><div class="a" style="left:56px;top:0px;width:2px;height:1px;background:#f0f0f0;"></div><div class="a" style="left:56px;top:1px;width:1px;height:1px;background:#696969;"></div><div class="a" style="left:57px;top:1px;width:1px;height:1px;background:#f0f0f0;"></div><div class="a" style="left:56px;top:2px;width:1px;height:16px;background:#a0a0a0;"></div><div class="a" style="left:57px;top:2px;width:1px;height:16px;background:#696969;"></div><div class="a" style="left:-1px;top:2.69px;line-height:14px;font-size:11px;color:#000;white-space:pre;width:57px;text-align:center;">Depots[1]</div></div><div class="a" style="left:210px;top:136px;width:63px;height:18px;overflow:hidden"><div class="a" style="left:0px;top:0px;width:63px;height:18px;background:#d3d3d3;"></div><div class="a" style="left:0px;top:1px;width:63px;height:1px;background:#e6e6e6;"></div><div class="a" style="left:1px;top:0px;width:60px;height:1px;background:#ffffff;"></div><div class="a" style="left:0px;top:1px;width:1px;height:17px;background:#ffffff;"></div><div class="a" style="left:0px;top:0px;width:1px;height:1px;background:#f0f0f0;"></div><div class="a" style="left:61px;top:0px;width:2px;height:1px;background:#f0f0f0;"></div><div class="a" style="left:61px;top:1px;width:1px;height:1px;background:#696969;"></div><div class="a" style="left:62px;top:1px;width:1px;height:1px;background:#f0f0f0;"></div><div class="a" style="left:61px;top:2px;width:1px;height:16px;background:#a0a0a0;"></div><div class="a" style="left:62px;top:2px;width:1px;height:16px;background:#696969;"></div><div class="a" style="left:-1px;top:2.69px;line-height:14px;font-size:11px;color:#000;white-space:pre;width:62px;text-align:center;">Vehicles[2]</div></div><div class="a" style="left:272px;top:134px;width:86px;height:20px;overflow:hidden"><div class="a" style="left:0px;top:0px;width:86px;height:20px;background:#add8e6;"></div><div class="a" style="left:1px;top:1px;width:84px;height:1px;background:#e3e3e3;"></div><div class="a" style="left:1px;top:1px;width:1px;height:19px;background:#e3e3e3;"></div><div class="a" style="left:1px;top:0px;width:83px;height:1px;background:#ffffff;"></div><div class="a" style="left:0px;top:1px;width:1px;height:19px;background:#ffffff;"></div><div class="a" style="left:0px;top:0px;width:1px;height:1px;background:#f0f0f0;"></div><div class="a" style="left:84px;top:0px;width:2px;height:1px;background:#f0f0f0;"></div><div class="a" style="left:84px;top:1px;width:1px;height:1px;background:#696969;"></div><div class="a" style="left:85px;top:1px;width:1px;height:1px;background:#f0f0f0;"></div><div class="a" style="left:84px;top:2px;width:1px;height:18px;background:#a0a0a0;"></div><div class="a" style="left:85px;top:2px;width:1px;height:18px;background:#696969;"></div><div class="a" style="left:-1px;top:4.69px;line-height:14px;font-size:11px;color:#10109c;white-space:pre;width:85px;text-align:center;">Constraints [0 ]</div><div class="a" style="left:3px;top:3px;width:80px;height:16px;border:1px dotted #522719;box-sizing:border-box"></div></div><div class="a" style="left:358px;top:136px;width:40px;height:18px;overflow:hidden"><div class="a" style="left:0px;top:0px;width:40px;height:18px;background:#d3d3d3;"></div><div class="a" style="left:0px;top:1px;width:40px;height:1px;background:#e6e6e6;"></div><div class="a" style="left:1px;top:0px;width:37px;height:1px;background:#ffffff;"></div><div class="a" style="left:0px;top:1px;width:1px;height:17px;background:#ffffff;"></div><div class="a" style="left:0px;top:0px;width:1px;height:1px;background:#f0f0f0;"></div><div class="a" style="left:38px;top:0px;width:2px;height:1px;background:#f0f0f0;"></div><div class="a" style="left:38px;top:1px;width:1px;height:1px;background:#696969;"></div><div class="a" style="left:39px;top:1px;width:1px;height:1px;background:#f0f0f0;"></div><div class="a" style="left:38px;top:2px;width:1px;height:16px;background:#a0a0a0;"></div><div class="a" style="left:39px;top:2px;width:1px;height:16px;background:#696969;"></div><div class="a" style="left:-1px;top:2.69px;line-height:14px;font-size:11px;color:#000;white-space:pre;width:39px;text-align:center;">Rules</div></div><div class="a" style="left:398px;top:136px;width:46px;height:18px;overflow:hidden"><div class="a" style="left:0px;top:0px;width:46px;height:18px;background:#d3d3d3;"></div><div class="a" style="left:0px;top:1px;width:46px;height:1px;background:#e6e6e6;"></div><div class="a" style="left:1px;top:0px;width:43px;height:1px;background:#ffffff;"></div><div class="a" style="left:0px;top:1px;width:1px;height:17px;background:#ffffff;"></div><div class="a" style="left:0px;top:0px;width:1px;height:1px;background:#f0f0f0;"></div><div class="a" style="left:44px;top:0px;width:2px;height:1px;background:#f0f0f0;"></div><div class="a" style="left:44px;top:1px;width:1px;height:1px;background:#696969;"></div><div class="a" style="left:45px;top:1px;width:1px;height:1px;background:#f0f0f0;"></div><div class="a" style="left:44px;top:2px;width:1px;height:16px;background:#a0a0a0;"></div><div class="a" style="left:45px;top:2px;width:1px;height:16px;background:#696969;"></div><div class="a" style="left:-1px;top:2.69px;line-height:14px;font-size:11px;color:#000;white-space:pre;width:45px;text-align:center;">Routes</div></div><div class="a" style="left:444px;top:136px;width:42px;height:18px;overflow:hidden"><div class="a" style="left:0px;top:0px;width:42px;height:18px;background:#d3d3d3;"></div><div class="a" style="left:0px;top:1px;width:42px;height:1px;background:#e6e6e6;"></div><div class="a" style="left:1px;top:0px;width:39px;height:1px;background:#ffffff;"></div><div class="a" style="left:0px;top:1px;width:1px;height:17px;background:#ffffff;"></div><div class="a" style="left:0px;top:0px;width:1px;height:1px;background:#f0f0f0;"></div><div class="a" style="left:40px;top:0px;width:2px;height:1px;background:#f0f0f0;"></div><div class="a" style="left:40px;top:1px;width:1px;height:1px;background:#696969;"></div><div class="a" style="left:41px;top:1px;width:1px;height:1px;background:#f0f0f0;"></div><div class="a" style="left:40px;top:2px;width:1px;height:16px;background:#a0a0a0;"></div><div class="a" style="left:41px;top:2px;width:1px;height:16px;background:#696969;"></div><div class="a" style="left:-1px;top:2.69px;line-height:14px;font-size:11px;color:#000;white-space:pre;width:41px;text-align:center;">Charts</div></div><div class="a" style="left:486px;top:136px;width:4px;height:18px;overflow:hidden"><div class="a" style="left:0px;top:0px;width:45px;height:18px;background:#d3d3d3;"></div><div class="a" style="left:0px;top:1px;width:45px;height:1px;background:#e6e6e6;"></div><div class="a" style="left:1px;top:0px;width:42px;height:1px;background:#ffffff;"></div><div class="a" style="left:0px;top:1px;width:1px;height:17px;background:#ffffff;"></div><div class="a" style="left:0px;top:0px;width:1px;height:1px;background:#f0f0f0;"></div><div class="a" style="left:43px;top:0px;width:2px;height:1px;background:#f0f0f0;"></div><div class="a" style="left:43px;top:1px;width:1px;height:1px;background:#696969;"></div><div class="a" style="left:44px;top:1px;width:1px;height:1px;background:#f0f0f0;"></div><div class="a" style="left:43px;top:2px;width:1px;height:16px;background:#a0a0a0;"></div><div class="a" style="left:44px;top:2px;width:1px;height:16px;background:#696969;"></div><div class="a" style="left:-1px;top:2.69px;line-height:14px;font-size:11px;color:#000;white-space:pre;width:44px;text-align:center;"></div></div><div class="a" style="left:491px;top:137px;width:16px;height:15px;background:#e9e9e9;border:1px solid #adadad;box-sizing:border-box"></div><svg class="a" style="left:0;top:0" width="1919" height="1026"><polygon points="500.2,141.5 500.2,147.5 496.8,144.5" fill="#000"/></svg><div class="a" style="left:507px;top:137px;width:16px;height:15px;background:#e9e9e9;border:1px solid #adadad;box-sizing:border-box"></div><svg class="a" style="left:0;top:0" width="1919" height="1026"><polygon points="513.8,141.5 513.8,147.5 517.2,144.5" fill="#000"/></svg><div class="a" style="left:26px;top:159px;width:491px;height:20px;background:#f0f0f0;"></div><div class="a" style="left:26px;top:179px;width:491px;height:827px;background:#f0f0f0;"></div><div class="a" style="left:26px;top:179px;width:491px;height:1px;background:#ffffff;"></div><div class="a" style="left:26px;top:179px;width:1px;height:827px;background:#ffffff;"></div><div class="a" style="left:27px;top:180px;width:489px;height:1px;background:#e3e3e3;"></div><div class="a" style="left:27px;top:180px;width:1px;height:825px;background:#e3e3e3;"></div><div class="a" style="left:516px;top:179px;width:1px;height:827px;background:#696969;"></div><div class="a" style="left:26px;top:1005px;width:491px;height:1px;background:#696969;"></div><div class="a" style="left:515px;top:180px;width:1px;height:825px;background:#a0a0a0;"></div><div class="a" style="left:27px;top:1004px;width:489px;height:1px;background:#a0a0a0;"></div><div class="a" style="left:30px;top:181px;width:483px;height:821px;background:#add8e6;"></div><div class="a" style="left:26px;top:159px;width:97px;height:20px;overflow:hidden"><div class="a" style="left:0px;top:0px;width:97px;height:20px;background:#add8e6;"></div><div class="a" style="left:1px;top:1px;width:95px;height:1px;background:#e3e3e3;"></div><div class="a" style="left:1px;top:1px;width:1px;height:19px;background:#e3e3e3;"></div><div class="a" style="left:1px;top:0px;width:94px;height:1px;background:#ffffff;"></div><div class="a" style="left:0px;top:1px;width:1px;height:19px;background:#ffffff;"></div><div class="a" style="left:0px;top:0px;width:1px;height:1px;background:#f0f0f0;"></div><div class="a" style="left:95px;top:0px;width:2px;height:1px;background:#f0f0f0;"></div><div class="a" style="left:95px;top:1px;width:1px;height:1px;background:#696969;"></div><div class="a" style="left:96px;top:1px;width:1px;height:1px;background:#f0f0f0;"></div><div class="a" style="left:95px;top:2px;width:1px;height:18px;background:#a0a0a0;"></div><div class="a" style="left:96px;top:2px;width:1px;height:18px;background:#696969;"></div><div class="a" style="left:-1px;top:4.69px;line-height:14px;font-size:11px;color:#10109c;white-space:pre;width:96px;text-align:center;">Combinations [0 ]</div></div><div class="a" style="left:123px;top:161px;width:59px;height:18px;overflow:hidden"><div class="a" style="left:0px;top:0px;width:59px;height:18px;background:#d3d3d3;"></div><div class="a" style="left:0px;top:1px;width:59px;height:1px;background:#e6e6e6;"></div><div class="a" style="left:1px;top:0px;width:56px;height:1px;background:#ffffff;"></div><div class="a" style="left:0px;top:1px;width:1px;height:17px;background:#ffffff;"></div><div class="a" style="left:0px;top:0px;width:1px;height:1px;background:#f0f0f0;"></div><div class="a" style="left:57px;top:0px;width:2px;height:1px;background:#f0f0f0;"></div><div class="a" style="left:57px;top:1px;width:1px;height:1px;background:#696969;"></div><div class="a" style="left:58px;top:1px;width:1px;height:1px;background:#f0f0f0;"></div><div class="a" style="left:57px;top:2px;width:1px;height:16px;background:#a0a0a0;"></div><div class="a" style="left:58px;top:2px;width:1px;height:16px;background:#696969;"></div><div class="a" style="left:-1px;top:2.69px;line-height:14px;font-size:11px;color:#000;white-space:pre;width:58px;text-align:center;">Orders [0 ]</div></div><div class="a" style="left:182px;top:161px;width:60px;height:18px;overflow:hidden"><div class="a" style="left:0px;top:0px;width:60px;height:18px;background:#d3d3d3;"></div><div class="a" style="left:0px;top:1px;width:60px;height:1px;background:#e6e6e6;"></div><div class="a" style="left:1px;top:0px;width:57px;height:1px;background:#ffffff;"></div><div class="a" style="left:0px;top:1px;width:1px;height:17px;background:#ffffff;"></div><div class="a" style="left:0px;top:0px;width:1px;height:1px;background:#f0f0f0;"></div><div class="a" style="left:58px;top:0px;width:2px;height:1px;background:#f0f0f0;"></div><div class="a" style="left:58px;top:1px;width:1px;height:1px;background:#696969;"></div><div class="a" style="left:59px;top:1px;width:1px;height:1px;background:#f0f0f0;"></div><div class="a" style="left:58px;top:2px;width:1px;height:16px;background:#a0a0a0;"></div><div class="a" style="left:59px;top:2px;width:1px;height:16px;background:#696969;"></div><div class="a" style="left:-1px;top:2.69px;line-height:14px;font-size:11px;color:#000;white-space:pre;width:59px;text-align:center;">Tasks[ 0 ]</div></div><div class="a" style="left:33px;top:184px;width:477px;height:20px;background:#f0f0f0;"></div><div class="a" style="left:33px;top:204px;width:477px;height:795px;background:#f0f0f0;"></div><div class="a" style="left:33px;top:204px;width:477px;height:1px;background:#ffffff;"></div><div class="a" style="left:33px;top:204px;width:1px;height:795px;background:#ffffff;"></div><div class="a" style="left:34px;top:205px;width:475px;height:1px;background:#e3e3e3;"></div><div class="a" style="left:34px;top:205px;width:1px;height:793px;background:#e3e3e3;"></div><div class="a" style="left:509px;top:204px;width:1px;height:795px;background:#696969;"></div><div class="a" style="left:33px;top:998px;width:477px;height:1px;background:#696969;"></div><div class="a" style="left:508px;top:205px;width:1px;height:793px;background:#a0a0a0;"></div><div class="a" style="left:34px;top:997px;width:475px;height:1px;background:#a0a0a0;"></div><div class="a" style="left:37px;top:206px;width:469px;height:789px;background:#add8e6;"></div><div class="a" style="left:33px;top:184px;width:95px;height:20px;overflow:hidden"><div class="a" style="left:0px;top:0px;width:95px;height:20px;background:#add8e6;"></div><div class="a" style="left:1px;top:1px;width:93px;height:1px;background:#e3e3e3;"></div><div class="a" style="left:1px;top:1px;width:1px;height:19px;background:#e3e3e3;"></div><div class="a" style="left:1px;top:0px;width:92px;height:1px;background:#ffffff;"></div><div class="a" style="left:0px;top:1px;width:1px;height:19px;background:#ffffff;"></div><div class="a" style="left:0px;top:0px;width:1px;height:1px;background:#f0f0f0;"></div><div class="a" style="left:93px;top:0px;width:2px;height:1px;background:#f0f0f0;"></div><div class="a" style="left:93px;top:1px;width:1px;height:1px;background:#696969;"></div><div class="a" style="left:94px;top:1px;width:1px;height:1px;background:#f0f0f0;"></div><div class="a" style="left:93px;top:2px;width:1px;height:18px;background:#a0a0a0;"></div><div class="a" style="left:94px;top:2px;width:1px;height:18px;background:#696969;"></div><div class="a" style="left:-1px;top:4.69px;line-height:14px;font-size:11px;color:#10109c;white-space:pre;width:94px;text-align:center;">OrderVehicle[ 0 ]</div></div><div class="a" style="left:128px;top:186px;width:92px;height:18px;overflow:hidden"><div class="a" style="left:0px;top:0px;width:92px;height:18px;background:#d3d3d3;"></div><div class="a" style="left:0px;top:1px;width:92px;height:1px;background:#e6e6e6;"></div><div class="a" style="left:1px;top:0px;width:89px;height:1px;background:#ffffff;"></div><div class="a" style="left:0px;top:1px;width:1px;height:17px;background:#ffffff;"></div><div class="a" style="left:0px;top:0px;width:1px;height:1px;background:#f0f0f0;"></div><div class="a" style="left:90px;top:0px;width:2px;height:1px;background:#f0f0f0;"></div><div class="a" style="left:90px;top:1px;width:1px;height:1px;background:#696969;"></div><div class="a" style="left:91px;top:1px;width:1px;height:1px;background:#f0f0f0;"></div><div class="a" style="left:90px;top:2px;width:1px;height:16px;background:#a0a0a0;"></div><div class="a" style="left:91px;top:2px;width:1px;height:16px;background:#696969;"></div><div class="a" style="left:-1px;top:2.69px;line-height:14px;font-size:11px;color:#000;white-space:pre;width:91px;text-align:center;">DepotVehicle[ 0 ]</div></div><div class="a" style="left:220px;top:186px;width:118px;height:18px;overflow:hidden"><div class="a" style="left:0px;top:0px;width:118px;height:18px;background:#d3d3d3;"></div><div class="a" style="left:0px;top:1px;width:118px;height:1px;background:#e6e6e6;"></div><div class="a" style="left:1px;top:0px;width:115px;height:1px;background:#ffffff;"></div><div class="a" style="left:0px;top:1px;width:1px;height:17px;background:#ffffff;"></div><div class="a" style="left:0px;top:0px;width:1px;height:1px;background:#f0f0f0;"></div><div class="a" style="left:116px;top:0px;width:2px;height:1px;background:#f0f0f0;"></div><div class="a" style="left:116px;top:1px;width:1px;height:1px;background:#696969;"></div><div class="a" style="left:117px;top:1px;width:1px;height:1px;background:#f0f0f0;"></div><div class="a" style="left:116px;top:2px;width:1px;height:16px;background:#a0a0a0;"></div><div class="a" style="left:117px;top:2px;width:1px;height:16px;background:#696969;"></div><div class="a" style="left:-1px;top:2.69px;line-height:14px;font-size:11px;color:#000;white-space:pre;width:117px;text-align:center;">OrderCompartment[ 0 ]</div></div><div class="a" style="left:338px;top:186px;width:67px;height:18px;overflow:hidden"><div class="a" style="left:0px;top:0px;width:67px;height:18px;background:#d3d3d3;"></div><div class="a" style="left:0px;top:1px;width:67px;height:1px;background:#e6e6e6;"></div><div class="a" style="left:1px;top:0px;width:64px;height:1px;background:#ffffff;"></div><div class="a" style="left:0px;top:1px;width:1px;height:17px;background:#ffffff;"></div><div class="a" style="left:0px;top:0px;width:1px;height:1px;background:#f0f0f0;"></div><div class="a" style="left:65px;top:0px;width:2px;height:1px;background:#f0f0f0;"></div><div class="a" style="left:65px;top:1px;width:1px;height:1px;background:#696969;"></div><div class="a" style="left:66px;top:1px;width:1px;height:1px;background:#f0f0f0;"></div><div class="a" style="left:65px;top:2px;width:1px;height:16px;background:#a0a0a0;"></div><div class="a" style="left:66px;top:2px;width:1px;height:16px;background:#696969;"></div><div class="a" style="left:-1px;top:2.69px;line-height:14px;font-size:11px;color:#000;white-space:pre;width:66px;text-align:center;">OrderDepot</div></div><div class="a" style="left:40px;top:209px;width:463px;height:783px;background:#000;"></div><div class="a" style="left:41px;top:210px;width:461px;height:781px;background:#ababab;"></div><div class="a" style="left:41px;top:210px;width:461px;height:20px;background:#fff;"></div><div class="a" style="left:91px;top:210px;width:1px;height:20px;background:#9a9a9a;"></div><div class="a" style="left:191px;top:211px;width:1px;height:19px;background:#dcdcdc;"></div><div class="a" style="left:291px;top:211px;width:1px;height:19px;background:#dcdcdc;"></div><div class="a" style="left:391px;top:211px;width:1px;height:19px;background:#dcdcdc;"></div><div class="a" style="left:491px;top:211px;width:1px;height:19px;background:#dcdcdc;"></div><div class="a" style="left:41px;top:230px;width:461px;height:1px;background:#a6a6a6;"></div><div class="a" style="left:98px;top:213.69px;line-height:14px;font-size:11px;color:#000;white-space:pre;">i</div><div class="a" style="left:198px;top:213.69px;line-height:14px;font-size:11px;color:#000;white-space:pre;">OrderCategory</div><div class="a" style="left:298px;top:213.69px;line-height:14px;font-size:11px;color:#000;white-space:pre;">Orders</div><div class="a" style="left:398px;top:213.69px;line-height:14px;font-size:11px;color:#000;white-space:pre;">Type</div><div class="a" style="left:497px;top:210px;width:5px;height:20px;overflow:hidden"><div class="a" style="left:1px;top:3.69px;line-height:14px;font-size:11px;color:#000;white-space:pre;">V</div></div><div class="a" style="left:41px;top:974px;width:461px;height:17px;background:#f0f0f0;"></div><div class="a" style="left:58px;top:982px;width:194px;height:2px;background:#8b8b8b;"></div></div><div class="a" style="left:539px;top:48px;width:1374px;height:20px;background:#f0f0f0;"></div><div class="a" style="left:539px;top:68px;width:1374px;height:957px;background:#f0f0f0;"></div><div class="a" style="left:539px;top:68px;width:1374px;height:1px;background:#ffffff;"></div><div class="a" style="left:539px;top:68px;width:1px;height:957px;background:#ffffff;"></div><div class="a" style="left:540px;top:69px;width:1372px;height:1px;background:#e3e3e3;"></div><div class="a" style="left:540px;top:69px;width:1px;height:955px;background:#e3e3e3;"></div><div class="a" style="left:1912px;top:68px;width:1px;height:957px;background:#696969;"></div><div class="a" style="left:539px;top:1024px;width:1374px;height:1px;background:#696969;"></div><div class="a" style="left:1911px;top:69px;width:1px;height:955px;background:#a0a0a0;"></div><div class="a" style="left:540px;top:1023px;width:1372px;height:1px;background:#a0a0a0;"></div><div class="a" style="left:543px;top:70px;width:1366px;height:951px;background:#add8e6;"></div><div class="a" style="left:539px;top:48px;width:46px;height:20px;overflow:hidden"><div class="a" style="left:0px;top:0px;width:46px;height:20px;background:#add8e6;"></div><div class="a" style="left:1px;top:1px;width:44px;height:1px;background:#e3e3e3;"></div><div class="a" style="left:1px;top:1px;width:1px;height:19px;background:#e3e3e3;"></div><div class="a" style="left:1px;top:0px;width:43px;height:1px;background:#ffffff;"></div><div class="a" style="left:0px;top:1px;width:1px;height:19px;background:#ffffff;"></div><div class="a" style="left:0px;top:0px;width:1px;height:1px;background:#f0f0f0;"></div><div class="a" style="left:44px;top:0px;width:2px;height:1px;background:#f0f0f0;"></div><div class="a" style="left:44px;top:1px;width:1px;height:1px;background:#696969;"></div><div class="a" style="left:45px;top:1px;width:1px;height:1px;background:#f0f0f0;"></div><div class="a" style="left:44px;top:2px;width:1px;height:18px;background:#a0a0a0;"></div><div class="a" style="left:45px;top:2px;width:1px;height:18px;background:#696969;"></div><div class="a" style="left:-1px;top:4.69px;line-height:14px;font-size:11px;color:#10109c;white-space:pre;width:45px;text-align:center;">Map</div></div><div class="a" style="left:585px;top:50px;width:67px;height:18px;overflow:hidden"><div class="a" style="left:0px;top:0px;width:67px;height:18px;background:#d3d3d3;"></div><div class="a" style="left:0px;top:1px;width:67px;height:1px;background:#e6e6e6;"></div><div class="a" style="left:1px;top:0px;width:64px;height:1px;background:#ffffff;"></div><div class="a" style="left:0px;top:1px;width:1px;height:17px;background:#ffffff;"></div><div class="a" style="left:0px;top:0px;width:1px;height:1px;background:#f0f0f0;"></div><div class="a" style="left:65px;top:0px;width:2px;height:1px;background:#f0f0f0;"></div><div class="a" style="left:65px;top:1px;width:1px;height:1px;background:#696969;"></div><div class="a" style="left:66px;top:1px;width:1px;height:1px;background:#f0f0f0;"></div><div class="a" style="left:65px;top:2px;width:1px;height:16px;background:#a0a0a0;"></div><div class="a" style="left:66px;top:2px;width:1px;height:16px;background:#696969;"></div><div class="a" style="left:-1px;top:2.69px;line-height:14px;font-size:11px;color:#000;white-space:pre;width:66px;text-align:center;">DataDisplay</div></div><svg class="a" style="left:546px;top:73px" width="1360" height="945" viewBox="546 73 1360 945" font-family="Liberation Sans, sans-serif"><rect x="546" y="73" width="1360" height="945" fill="#fdfcf8"/><g fill="#ecf2f5" stroke="#ecf2f5" stroke-width="9" stroke-linejoin="round"><path d="M1000 358L1015 350L1032 353L1046 368L1051 383L1040 405L1024 426L1008 440L996 452L985 470L975 470L985 445L998 425Z"/><ellipse cx="1757" cy="835" rx="55" ry="33" transform="rotate(-8 1757 835)"/><path d="M880 780L905 800L892 830L850 850L805 868L770 880L745 900L712 905L690 885L690 860L720 842L760 830L790 802L830 790Z"/><path d="M640 800L680 815L700 835L692 870L715 895L700 920L680 910L660 880L635 845Z"/><path d="M558 772L590 775L592 800L558 802Z"/><path d="M740 735L756 738L748 770L737 766Z"/><path d="M700 960L740 975L760 995L745 1018L700 1018L690 990Z"/><path d="M1760 995L1800 975L1850 962L1906 975L1906 1018L1742 1018Z"/></g><g fill="none" stroke="#ecf2f5" stroke-linecap="round" stroke-linejoin="round"><path d="M940 290L955 330L950 380L968 420L985 460L960 500L950 540L920 580L905 620L895 660L890 700L886 740L882 784" stroke-width="12"/><path d="M1610 800L1622 850L1640 890L1680 915L1715 935L1735 975L1755 1010" stroke-width="9"/><path d="M1410 640L1450 660L1470 705L1500 745L1560 790L1610 800" stroke-width="5"/></g><path d="M1293 610L1291 618L1289 626L1284 633L1276 638L1268 641L1260 645L1254 651L1245 656L1235 657L1225 656L1215 654L1205 651L1196 647L1190 640L1189 631L1187 624L1184 617L1180 610L1180 602L1183 595L1187 588L1190 580L1195 572L1204 567L1215 566L1226 567L1235 567L1244 567L1254 569L1262 573L1268 578L1277 582L1286 586L1293 593L1295 602L1293 610M1351 610L1347 626L1337 640L1328 653L1319 666L1304 676L1286 680L1268 682L1252 686L1235 693L1216 696L1197 693L1180 686L1164 677L1148 668L1136 656L1132 640L1136 624L1139 610L1138 596L1138 582L1144 568L1156 557L1167 546L1179 533L1195 522L1215 518L1235 523L1253 529L1270 534L1287 538L1301 547L1311 559L1320 571L1332 582L1345 594L1351 610M1388 610L1378 630L1367 648L1361 668L1356 691L1342 712L1318 725L1290 732L1263 737L1235 742L1207 739L1182 726L1164 709L1145 696L1122 686L1100 672L1086 653L1081 632L1076 610L1071 587L1073 563L1091 543L1117 531L1141 521L1162 509L1183 497L1209 491L1235 492L1261 493L1289 491L1320 492L1346 504L1362 525L1371 547L1380 568L1388 588L1388 610M1461 610L1464 642L1447 672L1423 697L1401 722L1376 744L1342 758L1303 760L1268 759L1235 765L1199 774L1160 775L1125 763L1095 743L1066 724L1037 702L1020 673L1022 640L1036 610L1045 583L1048 555L1055 527L1076 503L1103 484L1129 464L1158 441L1194 425L1235 425L1273 440L1305 456L1337 468L1368 483L1391 505L1405 532L1419 556L1441 581L1461 610M1504 610L1498 647L1473 679L1444 707L1424 737L1406 773L1377 807L1333 825L1283 830L1235 832L1186 833L1138 824L1100 798L1074 763L1051 734L1019 710L986 682L968 648L967 610L968 572L968 532L979 492L1012 460L1061 444L1108 434L1149 421L1190 406L1235 402L1279 410L1321 420L1368 425L1420 434L1463 457L1484 495L1491 535L1498 573L1504 610M1570 610L1563 656L1550 702L1519 741L1471 769L1425 791L1388 822L1348 859L1296 885L1235 889L1176 879L1117 869L1058 855L1009 826L982 780L971 732L955 692L928 653L908 610L910 564L928 521L945 476L964 428L999 385L1057 363L1122 361L1181 363L1235 359L1291 357L1344 371L1389 396L1435 420L1489 439L1544 467L1577 510L1581 561L1570 610M1656 610L1665 671L1636 727L1591 774L1547 820L1500 863L1438 891L1365 896L1297 892L1235 900L1168 916L1094 919L1028 898L972 861L918 823L863 782L828 729L829 667L856 610L877 560L885 508L898 454L935 408L986 373L1038 337L1092 295L1158 262L1235 260L1307 286L1368 318L1428 343L1486 370L1531 412L1556 462L1579 510L1617 556L1656 610M1710 610L1703 676L1664 735L1608 782L1563 830L1529 891L1482 952L1408 991L1321 1001L1235 1001L1148 1002L1062 990L990 949L944 887L908 829L859 784L802 736L765 676L760 610L768 544L771 475L785 402L836 342L919 309L1007 294L1083 276L1156 253L1235 241L1313 254L1387 276L1465 291L1555 305L1636 341L1682 404L1695 476L1701 544L1710 610M1281 606L1330 605L1370 600L1423 603L1475 599L1536 585M1267 614L1324 620L1376 627L1422 633L1462 630L1504 637L1552 637M1271 623L1311 639L1354 659L1405 677L1465 692L1506 713L1543 727L1575 745L1625 767M1284 638L1322 662L1371 692L1420 711L1463 739L1507 775L1545 794L1601 806M1256 628L1285 651L1315 681L1342 704L1370 738L1400 779L1430 805M1271 661L1294 690L1318 725L1350 751L1379 781L1395 822M1255 652L1272 698L1287 744L1303 780L1312 811L1335 838L1360 867L1393 895L1422 918M1238 631L1244 664L1252 700L1252 733L1260 782L1277 820L1288 851L1284 887L1308 918L1319 966L1324 999M1226 669L1222 704L1212 736L1200 776L1199 813L1176 857L1153 901L1131 944L1119 978M1229 631L1213 672L1194 709L1166 753L1155 790L1149 825L1132 856M1208 642L1184 668L1146 706L1113 742L1082 765L1047 790L1011 830L967 850M1214 629L1178 665L1135 696L1101 730L1073 765L1039 781L1002 812M1181 644L1148 667L1114 688L1080 711L1043 726L1006 749L957 765L908 776L865 797L836 834M1213 619L1168 637L1124 657L1078 675L1032 703L991 728L949 740L904 758L846 768L800 781M1177 620L1127 624L1072 626L1012 636L960 633L903 647L863 653L826 666M1171 611L1115 610L1074 605L1013 608L951 610L902 596L843 605L795 603L749 615M1210 605L1173 599L1121 590L1084 578L1032 558L992 553L957 538L912 536L870 514M1205 600L1153 586L1117 573L1070 564L1013 546L955 540L895 537L837 527L793 516M1209 596L1174 580L1139 567L1098 551L1046 533L998 521L950 516L903 516L851 499M1189 566L1157 537L1118 502L1088 470L1045 434M1207 570L1185 545L1167 517L1140 489L1125 459L1100 416L1071 388L1047 358M1225 581L1209 542L1188 495L1164 463L1147 428L1120 393L1085 362L1052 336L1012 310L985 288M1231 569L1231 525L1226 487L1215 438L1214 393L1221 362L1223 314L1234 269L1235 236M1245 558L1256 511L1261 468L1258 436L1253 399L1259 352L1268 310L1272 267L1289 238M1249 570L1261 526L1268 495L1274 451L1297 409L1305 370L1323 332L1341 289M1250 587L1272 556L1286 527L1308 497L1337 459L1358 428L1381 393L1412 370M1286 569L1331 540L1364 512L1402 494L1436 473L1467 452M1288 579L1331 551L1378 521L1401 496L1438 469L1464 438L1493 409L1520 365M1264 601L1320 583L1363 568L1421 551L1464 535L1499 512L1540 507L1587 505L1625 486L1666 460M1304 602L1364 600L1415 599L1454 601L1503 604L1557 598L1596 608L1636 607L1682 600M1391 591L1373 625L1358 651M1291 688L1343 728L1380 735M1649 389L1654 419L1669 433M1192 663L1218 688L1235 714M1235 427L1247 474L1264 503M1388 660L1358 664L1337 661M1324 527L1348 554L1368 571M1647 512L1623 522L1617 522M1438 485L1432 509L1430 518M1433 302L1397 305L1379 321M886 570L829 581L789 569M953 672L1013 679L1052 712M1126 497L1160 511L1180 529M1288 646L1284 697L1289 730M1201 590L1228 627L1221 657M1427 473L1453 497L1454 520M1218 646L1219 701L1224 736M1004 287L1024 304L1041 314M1182 516L1135 551L1102 588M1413 583L1384 602L1372 604M1102 977L1102 1011L1114 1034M993 282L1032 301L1061 330M1274 648L1316 656L1334 679M1181 213L1142 222L1122 207M1234 568L1213 605L1205 634M1254 637L1280 669L1276 674M1365 586L1392 642L1386 679M1479 672L1505 734L1543 771M1276 585L1293 644L1285 664M1300 622L1264 631L1239 619M1148 721L1096 728L1065 718M1168 731L1227 731L1257 742M1281 596L1315 627L1316 660M1119 690L1129 736L1112 760M1358 323L1307 355L1268 387M1148 758L1126 777L1119 781M1236 664L1286 669L1320 698M1603 346L1622 367L1642 382M1174 421L1206 450L1224 477M1230 267L1215 293L1195 314M1043 541L1020 566L1013 589M1490 903L1480 942L1479 954M1091 605L1046 635L1009 672M824 663L766 694L755 730M1327 678L1276 683L1248 694M1398 464L1440 508L1438 512M968 463L1000 489L1029 493M1225 862L1210 892L1219 916M1181 521L1200 550L1202 571M1313 636L1329 683L1332 700M1420 856L1431 892L1446 915M1121 831L1140 871L1133 898M1151 688L1128 714L1132 717M865 764L884 826L900 854M1526 632L1498 691L1512 728M1049 767L1082 784L1106 809M1440 744L1384 783L1365 829M1693 473L1694 500L1682 519M1502 463L1475 480L1452 500M881 804L852 821L841 836M1021 591L1055 604L1073 627M1523 671L1503 689L1485 708M998 473L983 509L976 532M929 733L937 777L964 809M1089 618L1045 658L1016 699M1149 622L1190 639L1219 648M1179 607L1167 633L1152 645M1173 606L1172 648L1150 672M1545 298L1504 344L1497 343M756 630L724 638L702 627M1418 674L1395 696L1372 717M1277 534L1276 600L1299 643M1050 604L1083 608L1103 626M1042 283L1094 314L1136 337M1101 487L1055 506L1022 496M1628 853L1611 892L1587 922M1539 595L1564 649L1586 671M1233 562L1202 582L1178 574M939 468L953 489L971 495M1058 483L1055 549L1082 590M1208 579L1249 579L1271 572M1285 853L1275 886L1264 909M1547 892L1570 914L1592 933M1511 379L1522 414L1546 440M1051 549L1031 589L1001 610M1239 974L1288 981L1322 970M1606 724L1656 726L1679 706M1334 852L1333 906L1312 938M1171 741L1235 751L1271 775M1663 624L1631 657L1601 682M1248 678L1268 696L1285 713M1090 287L1067 317L1049 339M1302 393L1338 433L1334 445M1267 586L1292 612L1300 637M1230 459L1193 474L1175 464M991 400L957 460L935 481M1095 281L1106 338L1109 372M1312 863L1376 879L1419 853M1601 842L1616 870L1637 875M1118 362L1085 410L1091 439M963 862L908 897L898 892M1642 416L1675 427L1697 415M1473 340L1448 397L1421 440M1302 649L1277 673L1266 691M1390 626L1426 671L1458 692M1499 561L1451 585L1442 607M871 733L897 783L913 805M1287 562L1259 579L1257 599M1272 219L1320 220L1352 237M1341 805L1370 861L1405 902M1206 717L1178 755L1181 777M1586 766L1551 816L1519 855M1056 712L1029 722L1010 741M1278 733L1233 747L1204 735M1261 809L1255 868L1233 907M1126 733L1181 762L1213 798M1351 778L1313 812L1306 837M1346 532L1378 554L1393 579M1297 682L1325 710L1344 715M1176 698L1118 703L1090 675M1408 713L1347 716L1307 723M1345 861L1378 872L1401 861M910 801L883 840L858 869M1434 807L1451 863L1434 900M892 472L900 507L897 529M1289 324L1240 349L1202 369M1108 852L1150 865L1171 885M1130 521L1141 565L1141 594M1023 276L1069 306L1087 320M748 635L797 641L827 661M1494 529L1542 545L1575 568M903 590L861 614L835 605M1323 884L1343 940L1378 976M1196 650L1224 683L1254 703M919 748L935 781L956 807M1496 527L1544 566L1581 573M1508 840L1464 871L1434 888M1308 992L1332 1040L1327 1078M1065 638L1060 668L1046 689M1330 506L1344 540L1357 554M1606 615L1629 643L1651 662M936 725L916 762L888 774M1629 728L1571 746L1546 733M1205 584L1273 586L1318 567M1318 659L1363 699L1400 704M1568 427L1624 460L1658 499M1014 296L965 334L949 348M861 551L874 615L878 652M1245 691L1246 719L1247 734M967 622L960 685L990 718M943 658L912 712L899 753M1305 596L1283 645L1298 675M1043 268L1078 328L1101 369M1278 584L1244 626L1230 634M1064 763L1059 823L1077 864M976 720L943 740L916 757M1072 607L1070 676L1056 717M1145 739L1176 780L1189 816M1595 684L1549 701L1535 724M1360 614L1309 627L1273 617M1505 472L1486 522L1462 554M1178 511L1155 551L1128 582M1258 650L1208 693L1166 730M1412 322L1405 358L1409 383M1136 782L1107 843L1124 882M1325 628L1283 657L1247 679M1451 625L1432 690L1389 735M1163 645L1148 676L1152 699M1589 619L1652 644L1697 686M1267 637L1244 664L1221 689M614 804L624 729L603 660L598 597L616 548M1857 751L1924 722L1968 717L2041 696L2109 648M1207 129L1162 172L1123 198L1067 214L996 224M1615 966L1630 913L1617 826L1620 745L1612 675M1875 859L1820 832L1780 789L1743 729L1730 650M931 75L931 144L905 224L916 305L901 387M1704 836L1704 778L1676 716L1671 667L1682 581M827 314L845 253L836 174L844 123L864 40M1750 566L1700 569L1655 587L1597 596L1537 602M1249 214L1291 255L1358 282L1395 311L1436 351M1252 92L1316 146L1369 190L1440 224L1521 256M1589 847L1627 828L1662 793L1677 754L1712 678M1169 968L1207 909L1227 868L1269 836L1330 796M1847 706L1811 738L1724 761L1688 782L1647 823M1774 928L1781 849L1803 780L1833 750L1865 679M1824 713L1793 784L1793 841L1804 886L1817 932M870 208L809 164L769 151L732 116L700 39M1755 205L1691 263L1625 290L1573 315L1510 322M1400 208L1444 269L1470 309L1480 362L1494 407M915 866L902 930L901 1015L933 1098L994 1156M1455 273L1405 291L1359 327L1270 341L1227 330M940 920L985 950L1005 986L1016 1042L1037 1076M1678 571L1717 647L1763 697L1807 719L1864 769M814 148L865 187L910 209L975 248L1020 300M821 135L806 61L757 -4L698 -60L670 -118M567 933L515 921L434 929L387 939L321 963M552 564L509 579L428 588L374 574L321 548M1568 131L1629 109L1691 87L1731 75L1781 84M794 170L781 209L787 284L803 322L823 388M686 895L657 858L617 807L581 778L542 752M746 614L718 538L722 479L722 397L724 337M1826 807L1810 861L1789 948L1745 1022L1684 1076M619 562L671 571L742 577L808 574L863 545M1232 93L1250 170L1235 240L1193 313L1160 338M1469 331L1414 286L1354 258L1272 226L1218 218M1427 187L1394 130L1350 84L1319 48L1278 27M938 303L1006 349L1058 394L1091 432L1121 487" fill="none" stroke="#f6f4ec" stroke-width="2.2" stroke-linejoin="round"/><g fill="none" stroke-linecap="round" stroke-linejoin="round"><path d="M1062 73L1075 150L1110 230L1125 262L1150 320L1180 380L1215 450L1235 520L1245 590" stroke="#fcf1e9" stroke-width="4"/><path d="M546 560L700 548L790 552L900 590L1000 610L1100 600L1246 592L1340 640L1460 660" stroke="#fcf1e9" stroke-width="4"/><path d="M1246 592L1255 680L1270 760L1262 860L1240 940L1200 1017" stroke="#fcf1e9" stroke-width="4"/><path d="M1246 592L1320 560L1400 520L1480 480L1560 440L1640 380L1700 300" stroke="#fcf1e9" stroke-width="4"/><path d="M1460 600L1540 612L1620 625L1720 640L1800 640L1906 640" stroke="#fcf1e9" stroke-width="4"/><path d="M546 905L620 930L700 910L800 900L880 890L960 870L1040 840" stroke="#fcf1e9" stroke-width="4"/><path d="M860 612L800 680L760 715L680 770L600 790L546 800" stroke="#fcf1e9" stroke-width="4"/><path d="M1906 250L1820 280L1760 300L1700 330" stroke="#fcf1e9" stroke-width="4"/><path d="M1300 780L1330 860L1360 940L1390 1017" stroke="#fcf1e9" stroke-width="4"/><path d="M1175 72L1243 82L1287 96L1304 123L1321 165L1341 206L1380 255L1395 300L1380 322L1375 346L1346 385" stroke="#fcebe4" stroke-width="7"/><path d="M1595 73L1606 121L1604 182L1596 255L1587 279L1545 289" stroke="#fcebe4" stroke-width="7"/><path d="M1400 240L1460 257L1545 289L1606 292L1655 314L1728 387L1801 473L1862 534L1906 575" stroke="#fcebe4" stroke-width="7"/><path d="M552 73L548 120L546 160" stroke="#fcebe4" stroke-width="7"/><path d="M940 73L975 100L993 160L996 223L998 290L1000 305L1061 326L1080 363L1110 412L1122 446L1107 485L1088 534L1070 560L1068 589L1049 637L1015 686L1000 710L947 780L900 840L904 888L880 948L828 984L816 1017" stroke="#fcebe4" stroke-width="7"/><path d="M1107 686L1122 735L1150 752L1200 745L1244 735L1305 759L1365 759L1400 754L1440 790L1470 840L1500 880L1520 930L1545 975L1570 1017" stroke="#fcebe4" stroke-width="7"/><path d="M1049 637L1080 690L1107 686" stroke="#fcebe4" stroke-width="7"/><path d="M1175 72L1243 82L1287 96L1304 123L1321 165L1341 206L1380 255L1395 300L1380 322L1375 346L1346 385" stroke="#fffbd4" stroke-width="5"/><path d="M1595 73L1606 121L1604 182L1596 255L1587 279L1545 289" stroke="#fffbd4" stroke-width="5"/><path d="M1400 240L1460 257L1545 289L1606 292L1655 314L1728 387L1801 473L1862 534L1906 575" stroke="#fffbd4" stroke-width="5"/><path d="M552 73L548 120L546 160" stroke="#fffbd4" stroke-width="5"/><path d="M940 73L975 100L993 160L996 223L998 290L1000 305L1061 326L1080 363L1110 412L1122 446L1107 485L1088 534L1070 560L1068 589L1049 637L1015 686L1000 710L947 780L900 840L904 888L880 948L828 984L816 1017" stroke="#fffbd4" stroke-width="5"/><path d="M1107 686L1122 735L1150 752L1200 745L1244 735L1305 759L1365 759L1400 754L1440 790L1470 840L1500 880L1520 930L1545 975L1570 1017" stroke="#fffbd4" stroke-width="5"/><path d="M1049 637L1080 690L1107 686" stroke="#fffbd4" stroke-width="5"/></g><g fill="#d0d0d0" stroke="#d0d0d0" stroke-width="0.5" font-size="14.3"><text x="781" y="101.5" textLength="56" lengthAdjust="spacing">Marwitz</text><text x="845" y="105.5" textLength="117" lengthAdjust="spacing">Hohenschöpping</text><text x="794" y="146.5" textLength="51" lengthAdjust="spacing">Bötzow</text><text x="594" y="217" textLength="46" lengthAdjust="spacing">Pausin</text><text x="665" y="216" textLength="68" lengthAdjust="spacing">Wansdorf</text><text x="878" y="231" textLength="96" lengthAdjust="spacing">Hennigsdorf</text><text x="764" y="272.5" textLength="31" lengthAdjust="spacing">Dorf</text><text x="1322" y="83" textLength="84" lengthAdjust="spacing">Schönwalde</text><text x="1211" y="96" textLength="64" lengthAdjust="spacing">Feldheim</text><text x="1047" y="113.5" textLength="49" lengthAdjust="spacing">Hohen</text><text x="1030" y="127.5" textLength="77" lengthAdjust="spacing">Neuendorf</text><text x="1193" y="132" textLength="110" lengthAdjust="spacing">Mühlenbecker</text><text x="1229" y="146.5" textLength="33" lengthAdjust="spacing">Land</text><text x="1410" y="137.5" textLength="109" lengthAdjust="spacing">Hobrechtsfelde</text><text x="1331" y="171" textLength="91" lengthAdjust="spacing">Schönerlinde</text><text x="1214" y="226" textLength="63" lengthAdjust="spacing">Schildow</text><text x="1048" y="242.5" textLength="155" lengthAdjust="spacing">Glienicke/Nordbahn</text><text x="1097" y="292.5" textLength="75" lengthAdjust="spacing">Hermsdorf</text><text x="1398" y="293.5" textLength="45" lengthAdjust="spacing">Karow</text><text x="1311" y="307" textLength="81" lengthAdjust="spacing">Französisch</text><text x="965" y="306" textLength="92" lengthAdjust="spacing">Schulzendorf</text><text x="1606" y="82" textLength="54" lengthAdjust="spacing">Bernau</text><text x="1595" y="96" textLength="74" lengthAdjust="spacing">bei Berlin</text><text x="1511" y="96" textLength="63" lengthAdjust="spacing">Schönow</text><text x="1551" y="123" textLength="79" lengthAdjust="spacing">Friedenstal</text><text x="1705" y="143.5" textLength="61" lengthAdjust="spacing">Börnicke</text><text x="1782" y="141.5" textLength="92" lengthAdjust="spacing">Willmersdorf</text><text x="1496" y="174.5" textLength="67" lengthAdjust="spacing">Panketal</text><text x="1607" y="180" textLength="81" lengthAdjust="spacing">Birkenhöhe</text><text x="1864" y="181" textLength="56" lengthAdjust="spacing">Weesow</text><text x="1507" y="205.5" textLength="80" lengthAdjust="spacing">Röntgental</text><text x="1661" y="205.5" textLength="57" lengthAdjust="spacing">Elisenau</text><text x="1454" y="231.5" textLength="35" lengthAdjust="spacing">Buch</text><text x="1644" y="234" textLength="83" lengthAdjust="spacing">Birkholzaue</text><text x="1779" y="245.5" textLength="47" lengthAdjust="spacing">Löhme</text><text x="1871" y="238" textLength="89" lengthAdjust="spacing">Werneuchen</text><text x="1484" y="261" textLength="68" lengthAdjust="spacing">Neu Buch</text><text x="1791" y="267.5" textLength="52" lengthAdjust="spacing">Seefeld</text><text x="1617" y="314" textLength="99" lengthAdjust="spacing">Gut Blumberg</text><text x="535" y="310.5" textLength="73" lengthAdjust="spacing">Brieselang</text><text x="884" y="309" textLength="48" lengthAdjust="spacing">Nieder</text><text x="870" y="321.5" textLength="77" lengthAdjust="spacing">Neuendorf</text><text x="749" y="331" textLength="89" lengthAdjust="spacing">Schönwalde-</text><text x="776" y="343.5" textLength="35" lengthAdjust="spacing">Glien</text><text x="625" y="369" textLength="107" lengthAdjust="spacing">Falkenhagener</text><text x="659" y="382" textLength="40" lengthAdjust="spacing">Alpen</text><text x="598" y="400" textLength="71" lengthAdjust="spacing">Waldheim</text><text x="916" y="384" textLength="94" lengthAdjust="spacing">Konradshöhe</text><text x="678" y="429.5" textLength="76" lengthAdjust="spacing">Falkensee</text><text x="771" y="437.5" textLength="119" lengthAdjust="spacing">Kol. Waldessaum</text><text x="939" y="431" textLength="59" lengthAdjust="spacing">Tegelort</text><text x="866" y="458" textLength="81" lengthAdjust="spacing">Hakenfelde</text><text x="794" y="480.5" textLength="108" lengthAdjust="spacing">Falkenhagener</text><text x="834" y="493" textLength="29" lengthAdjust="spacing">Feld</text><text x="964" y="487" textLength="101" lengthAdjust="spacing">Jungfernheide</text><text x="568" y="488" textLength="95" lengthAdjust="spacing">Neurohrbeck</text><text x="952" y="512" textLength="75" lengthAdjust="spacing">Haselhorst</text><text x="620" y="518" textLength="61" lengthAdjust="spacing">Dallgow-</text><text x="621" y="531" textLength="60" lengthAdjust="spacing">Döberitz</text><text x="776" y="524" textLength="59" lengthAdjust="spacing">Staaken</text><text x="885" y="537" textLength="62" lengthAdjust="spacing">Spandau</text><text x="1084" y="317.5" textLength="109" lengthAdjust="spacing">Waidmannslust</text><text x="1320" y="320" textLength="63" lengthAdjust="spacing">Buchholz</text><text x="1212" y="337" textLength="71" lengthAdjust="spacing">Rosenthal</text><text x="1353" y="358" textLength="90" lengthAdjust="spacing">Blankenburg</text><text x="1188" y="372" textLength="88" lengthAdjust="spacing">Wilhelmsruh</text><text x="1043" y="369.5" textLength="37" lengthAdjust="spacing">Tegel</text><text x="1145" y="413" textLength="99" lengthAdjust="spacing">Reinickendorf</text><text x="1341" y="422" textLength="134" lengthAdjust="spacing">Stadtrandsiedlung</text><text x="1265" y="432.5" textLength="57" lengthAdjust="spacing">Pankow</text><text x="1376" y="435" textLength="63" lengthAdjust="spacing">Malchow</text><text x="1132" y="457" textLength="87" lengthAdjust="spacing">Kol. Nordpol</text><text x="1377" y="454.5" textLength="79" lengthAdjust="spacing">Weißensee</text><text x="1189" y="472.5" textLength="113" lengthAdjust="spacing">Gesundbrunnen</text><text x="1173" y="498" textLength="63" lengthAdjust="spacing">Wedding</text><text x="1298" y="513.5" textLength="77" lengthAdjust="spacing">Prenzlauer</text><text x="1320" y="526" textLength="33" lengthAdjust="spacing">Berg</text><text x="1066" y="527.5" textLength="84" lengthAdjust="spacing">Kol. Zukunft</text><text x="1478" y="334.5" textLength="80" lengthAdjust="spacing">Lindenberg</text><text x="1667" y="332" textLength="69" lengthAdjust="spacing">Blumberg</text><text x="1788" y="346" textLength="93" lengthAdjust="spacing">Krummensee</text><text x="1505" y="363" textLength="63" lengthAdjust="spacing">Klarahöh</text><text x="1854" y="391" textLength="96" lengthAdjust="spacing">Altlandsberg</text><text x="1881" y="403" textLength="34" lengthAdjust="spacing">Nord</text><text x="1586" y="408" textLength="93" lengthAdjust="spacing">Ahrensfelde</text><text x="1718" y="407" textLength="94" lengthAdjust="spacing">Trappenfelde</text><text x="1509" y="431" textLength="79" lengthAdjust="spacing">Falkenberg</text><text x="1858" y="444" textLength="92" lengthAdjust="spacing">Altlandsberg</text><text x="1701" y="461.5" textLength="49" lengthAdjust="spacing">Hönow</text><text x="1708" y="475" textLength="35" lengthAdjust="spacing">Nord</text><text x="1833" y="474" textLength="58" lengthAdjust="spacing">Seeberg</text><text x="1833" y="486.5" textLength="59" lengthAdjust="spacing">Siedlung</text><text x="1632" y="490" textLength="41" lengthAdjust="spacing">Eiche-</text><text x="1639" y="503" textLength="24" lengthAdjust="spacing">Süd</text><text x="1708" y="496" textLength="50" lengthAdjust="spacing">Hönow</text><text x="1528" y="516.5" textLength="61" lengthAdjust="spacing">Marzahn</text><text x="495" y="392" textLength="77" lengthAdjust="spacing">Brieselang</text><text x="512" y="460.5" textLength="48" lengthAdjust="spacing">Dyrotz-</text><text x="521" y="473" textLength="31" lengthAdjust="spacing">Luch</text><text x="804" y="565.5" textLength="95" lengthAdjust="spacing">Kol. Egelpfuhl</text><text x="846" y="578" textLength="11" lengthAdjust="spacing">II</text><text x="983" y="571.5" textLength="90" lengthAdjust="spacing">Kol. Ruhwald</text><text x="859" y="600" textLength="95" lengthAdjust="spacing">Wilhelmstadt</text><text x="734" y="617" textLength="59" lengthAdjust="spacing">Seeburg</text><text x="852" y="679" textLength="46" lengthAdjust="spacing">Gatow</text><text x="689" y="732" textLength="105" lengthAdjust="spacing">Groß Glienicke</text><text x="525" y="743.5" textLength="68" lengthAdjust="spacing">Fahrland</text><text x="821" y="752.5" textLength="91" lengthAdjust="spacing">Hohengatow</text><text x="607" y="775.5" textLength="74" lengthAdjust="spacing">Krampnitz</text><text x="722" y="789" textLength="27" lengthAdjust="spacing">Aue</text><text x="781" y="790.5" textLength="51" lengthAdjust="spacing">Kladow</text><text x="1152" y="567" textLength="48" lengthAdjust="spacing">Moabit</text><text x="1378" y="559.5" textLength="71" lengthAdjust="spacing">Fennpfuhl</text><text x="1012" y="595" textLength="62" lengthAdjust="spacing">Westend</text><text x="1340" y="603" textLength="100" lengthAdjust="spacing">Friedrichshain</text><text x="1061" y="651" textLength="64" lengthAdjust="spacing">Halensee</text><text x="1411" y="643" textLength="98" lengthAdjust="spacing">Rummelsburg</text><text x="1221" y="666" textLength="73" lengthAdjust="spacing">Kreuzberg</text><text x="1034" y="671.5" textLength="76" lengthAdjust="spacing">Grunewald</text><text x="1353" y="666" textLength="85" lengthAdjust="spacing">Alt-Treptow</text><text x="1138" y="691" textLength="84" lengthAdjust="spacing">Schöneberg</text><text x="1411" y="689" textLength="51" lengthAdjust="spacing">Stralau</text><text x="1324" y="706" textLength="63" lengthAdjust="spacing">Neukölln</text><text x="1022" y="716.5" textLength="111" lengthAdjust="spacing">Schmargendorf</text><text x="1393" y="749" textLength="124" lengthAdjust="spacing">Baumschulenweg</text><text x="1224" y="768" textLength="76" lengthAdjust="spacing">Tempelhof</text><text x="1042" y="773" textLength="54" lengthAdjust="spacing">Dahlem</text><text x="1109" y="777" textLength="52" lengthAdjust="spacing">Steglitz</text><text x="1429" y="783" textLength="140" lengthAdjust="spacing">Niederschöneweide</text><text x="1475" y="554" textLength="74" lengthAdjust="spacing">Herzberge</text><text x="1608" y="555" textLength="78" lengthAdjust="spacing">Hellersdorf</text><text x="1781" y="556" textLength="99" lengthAdjust="spacing">Neuenhagen</text><text x="1794" y="570.5" textLength="74" lengthAdjust="spacing">bei Berlin</text><text x="1750" y="592.5" textLength="101" lengthAdjust="spacing">Hoppegarten</text><text x="1651" y="606.5" textLength="71" lengthAdjust="spacing">Mahlsdorf</text><text x="1549" y="615.5" textLength="58" lengthAdjust="spacing">Biesdorf</text><text x="1725" y="637.5" textLength="61" lengthAdjust="spacing">Dahlwitz</text><text x="1755" y="671" textLength="87" lengthAdjust="spacing">Münchehofe</text><text x="1490" y="703" textLength="70" lengthAdjust="spacing">Karlshorst</text><text x="1673" y="702" textLength="75" lengthAdjust="spacing">Waldesruh</text><text x="1594" y="743.5" textLength="77" lengthAdjust="spacing">Uhlenhorst</text><text x="1805" y="740" textLength="87" lengthAdjust="spacing">Schöneiche</text><text x="1812" y="754" textLength="74" lengthAdjust="spacing">bei Berlin</text><text x="578" y="820.5" textLength="95" lengthAdjust="spacing">Neu Fahrland</text><text x="796" y="814" textLength="123" lengthAdjust="spacing">Schwanenwerder</text><text x="704" y="850.5" textLength="51" lengthAdjust="spacing">Sacrow</text><text x="873" y="849.5" textLength="76" lengthAdjust="spacing">Nikolassee</text><text x="982" y="852" textLength="77" lengthAdjust="spacing">Zehlendorf</text><text x="515" y="882" textLength="45" lengthAdjust="spacing">Bornim</text><text x="818" y="891.5" textLength="65" lengthAdjust="spacing">Wannsee</text><text x="563" y="908.5" textLength="70" lengthAdjust="spacing">Bornstedt</text><text x="903" y="903" textLength="107" lengthAdjust="spacing">Kleinmachnow</text><text x="715" y="916" textLength="34" lengthAdjust="spacing">Klein</text><text x="700" y="929" textLength="64" lengthAdjust="spacing">Glienicke</text><text x="824" y="942" textLength="72" lengthAdjust="spacing">Dreilinden</text><text x="726" y="967" textLength="113" lengthAdjust="spacing">Kohlhasenbrück</text><text x="910" y="979" textLength="80" lengthAdjust="spacing">Stahnsdorf</text><text x="561" y="983.5" textLength="61" lengthAdjust="spacing">Potsdam</text><text x="573" y="996.5" textLength="35" lengthAdjust="spacing">West</text><text x="645" y="996.5" textLength="61" lengthAdjust="spacing">Teltower</text><text x="645" y="1009.5" textLength="60" lengthAdjust="spacing">Vorstadt</text><text x="736" y="997.5" textLength="92" lengthAdjust="spacing">Steinstücken</text><text x="749" y="1014.5" textLength="66" lengthAdjust="spacing">Am Stern</text><text x="841" y="1018" textLength="81" lengthAdjust="spacing">Kienwerder</text><text x="1341" y="804" textLength="32" lengthAdjust="spacing">Britz</text><text x="1437" y="820.5" textLength="89" lengthAdjust="spacing">Johannisthal</text><text x="1225" y="837" textLength="80" lengthAdjust="spacing">Mariendorf</text><text x="1093" y="853" textLength="85" lengthAdjust="spacing">Lichterfelde</text><text x="1268" y="874" textLength="114" lengthAdjust="spacing">Kol. Heimaterde</text><text x="1319" y="888" textLength="55" lengthAdjust="spacing">Buckow</text><text x="1438" y="891.5" textLength="47" lengthAdjust="spacing">Rudow</text><text x="1184" y="916" textLength="86" lengthAdjust="spacing">Marienfelde</text><text x="1323" y="956" textLength="88" lengthAdjust="spacing">Großziethen</text><text x="1041" y="969" textLength="44" lengthAdjust="spacing">Teltow</text><text x="1269" y="981" textLength="84" lengthAdjust="spacing">Lichtenrade</text><text x="1085" y="1003" textLength="74" lengthAdjust="spacing">Birkenhain</text><text x="1331" y="1013" textLength="86" lengthAdjust="spacing">Kleinziethen</text><text x="986" y="1027" textLength="76" lengthAdjust="spacing">Ruhlsdorf</text><text x="1655" y="797" textLength="113" lengthAdjust="spacing">Friedrichshagen</text><text x="1601" y="821" textLength="64" lengthAdjust="spacing">Köpenick</text><text x="1795" y="828.5" textLength="72" lengthAdjust="spacing">Rahnsdorf</text><text x="1532" y="839" textLength="68" lengthAdjust="spacing">Adlershof</text><text x="1820" y="868.5" textLength="36" lengthAdjust="spacing">Siedl.</text><text x="1793" y="882" textLength="89" lengthAdjust="spacing">Spreewiesen</text><text x="1507" y="892" textLength="84" lengthAdjust="spacing">Altglienicke</text><text x="1735" y="915.5" textLength="87" lengthAdjust="spacing">Müggelheim</text><text x="1491" y="962.5" textLength="84" lengthAdjust="spacing">Schönefeld</text><text x="1683" y="984" textLength="91" lengthAdjust="spacing">Karolinenhof</text><text x="1853" y="964.5" textLength="46" lengthAdjust="spacing">Gosen-</text><text x="1845" y="978" textLength="70" lengthAdjust="spacing">Neu Zittau</text><text x="1552" y="997" textLength="60" lengthAdjust="spacing">Siedlung</text><text x="1551" y="1010" textLength="64" lengthAdjust="spacing">Hubertus</text><text x="577" y="959.5" font-size="22" font-weight="bold" stroke="none" textLength="99" lengthAdjust="spacing" fill="#cbcbcb">Potsdam</text><text x="1184" y="606" font-size="42" font-weight="bold" stroke="none" textLength="120.5" lengthAdjust="spacing" fill="#cbcbcb">Berlin</text></g><path d="M1246 592L924.7 227.3L1071 116L1126 238L1247.7 133.5L1631.7 404L1246 592" fill="none" stroke="#0fdce2" stroke-width="2.8" stroke-dasharray="5.6 4.4"/><path d="M1246 592L959.7 899.3L952.8 975L1065.7 964.8L1533 958.7L1246 592" fill="none" stroke="#e1101c" stroke-width="2.8" stroke-dasharray="5.6 4.4"/><rect x="1070.5" y="117" width="76" height="34.3" fill="#fff"/><rect x="1247.2" y="134.5" width="76" height="34.3" fill="#fff"/><rect x="1125.5" y="239" width="236.5" height="51.2" fill="#fff"/><rect x="924.2" y="228.3" width="76" height="34.3" fill="#fff"/><rect x="1631.2" y="405" width="236.5" height="51.2" fill="#fff"/><rect x="959.2" y="900.3" width="236.5" height="51.2" fill="#fff"/><rect x="952.3" y="976" width="76" height="34.3" fill="#fff"/><rect x="1065.2" y="965.8" width="76" height="34.3" fill="#fff"/><rect x="1532.5" y="959.7" width="76" height="34.3" fill="#fff"/><polygon points="1061.2,111.4 1080.8,111.4 1071,120.3" fill="#0000ff"/><line x1="1060.5" y1="111" x2="1081.5" y2="111" stroke="#000" stroke-width="1.2"/><polygon points="1237.9,128.9 1257.5,128.9 1247.7,137.8" fill="#0000ff"/><line x1="1237.2" y1="128.5" x2="1258.2" y2="128.5" stroke="#000" stroke-width="1.2"/><polygon points="1116.2,233.4 1135.8,233.4 1126,242.3" fill="#0000ff"/><line x1="1115.5" y1="233" x2="1136.5" y2="233" stroke="#000" stroke-width="1.2"/><polygon points="914.9,222.7 934.5,222.7 924.7,231.6" fill="#0000ff"/><line x1="914.2" y1="222.3" x2="935.2" y2="222.3" stroke="#000" stroke-width="1.2"/><polygon points="1621.9,399.4 1641.5,399.4 1631.7,408.3" fill="#0000ff"/><line x1="1621.2" y1="399" x2="1642.2" y2="399" stroke="#000" stroke-width="1.2"/><polygon points="949.9,894.7 969.5,894.7 959.7,903.6" fill="#0000ff"/><line x1="949.2" y1="894.3" x2="970.2" y2="894.3" stroke="#000" stroke-width="1.2"/><polygon points="943,970.4 962.6,970.4 952.8,979.3" fill="#0000ff"/><line x1="942.3" y1="970" x2="963.3" y2="970" stroke="#000" stroke-width="1.2"/><polygon points="1055.9,960.2 1075.5,960.2 1065.7,969.1" fill="#0000ff"/><line x1="1055.2" y1="959.8" x2="1076.2" y2="959.8" stroke="#000" stroke-width="1.2"/><polygon points="1523.2,954.1 1542.8,954.1 1533,963" fill="#0000ff"/><line x1="1522.5" y1="953.7" x2="1543.5" y2="953.7" stroke="#000" stroke-width="1.2"/><g font-size="15.2" fill="#0000ff" style="white-space:pre"><text x="1074.67" y="129.5">Order_208</text><text x="1070.5" y="146.4">delivery</text><text x="1251.37" y="147">Order_204</text><text x="1247.2" y="163.9">delivery</text><text x="1129.67" y="251.5">Order_200</text><text x="1125.5" y="268.4">delivery</text><text x="1125.5" y="285.3">.Delivery.Categories=[4711;4711a]</text><text x="928.37" y="240.8">Order_207</text><text x="924.2" y="257.7">delivery</text><text x="1635.37" y="417.5">Order_203</text><text x="1631.2" y="434.4">delivery</text><text x="1631.2" y="451.3">.Delivery.Categories=[4711;4711c]</text><text x="963.37" y="912.8">Order_202</text><text x="959.2" y="929.7">delivery</text><text x="959.2" y="946.6">.Delivery.Categories=[4711;4711b]</text><text x="956.47" y="988.5">Order_206</text><text x="952.3" y="1005.4">delivery</text><text x="1069.37" y="978.3">Order_201</text><text x="1065.2" y="995.2">delivery</text><text x="1536.67" y="972.2">Order_205</text><text x="1532.5" y="989.1">delivery</text></g><defs><linearGradient id="tb" x1="0" y1="0" x2="0" y2="1"><stop offset="0" stop-color="#f40000"/><stop offset=".55" stop-color="#d80000"/><stop offset="1" stop-color="#8e0000"/></linearGradient></defs><rect x="1229" y="595.5" width="34.5" height="4.2" fill="#080808"/><rect x="1238.5" y="581.3" width="25.5" height="14.6" fill="url(#tb)"/><path d="M1238.5 585.5h-5.2l-6.4 7v6.5h11.6z" fill="#c80000"/><path d="M1237.2 587h-4l-3.2 4h7.2z" fill="#1a1a1a"/><rect x="1225.5" y="597" width="4" height="2.2" fill="#d8d8d8"/><circle cx="1233" cy="599" r="3.3" fill="#3c3c3c"/><circle cx="1233" cy="599" r="1.3" fill="#6a6a6a"/><circle cx="1249.7" cy="599" r="3.3" fill="#3c3c3c"/><circle cx="1249.7" cy="599" r="1.3" fill="#6a6a6a"/><circle cx="1257" cy="599" r="3.3" fill="#3c3c3c"/><circle cx="1257" cy="599" r="1.3" fill="#6a6a6a"/><g style="mix-blend-mode:multiply"><polygon fill="#ffe600" stroke="#ffe600" stroke-width="0.6" stroke-linejoin="round" points="1117,276.7 1138,271 1180,267 1222.6,266 1265,268.3 1307,274 1349,282.4 1357.6,286.3 1373,286.3 1373,307 1335,303.5 1307,299.2 1279,293.6 1250.7,289.4 1222.6,287.3 1180,287 1138,292 1117,297"/><polygon fill="#ffe600" stroke="#ffe600" stroke-width="0.6" stroke-linejoin="round" points="1636.7,431.3 1690,431.3 1742,434.5 1794,439 1833.4,443 1846.5,446.3 1861.5,454 1861.5,468.4 1840,467 1820.4,462.5 1794,459.3 1742,455.4 1690,452 1636.7,450.8"/><polygon fill="#ffe600" stroke="#ffe600" stroke-width="0.6" stroke-linejoin="round" points="972,931 978,925 990,920 1031,919.4 1085,922 1140,927.5 1180,931 1194,934.3 1194,954.6 1153,954 1099,952 1058,949 1018,944.5 972,943"/><g fill="none" stroke="#ffe600" stroke-width="8" stroke-linejoin="round" stroke-linecap="butt"><path d="M1235 465L1231 464L1228 458L1222 452L1210 444L1195 430L1172 410L1164 396L1161 382L1161 372L1166 368L1175 365L1247 357L1325 351L1340 353L1465 389L1471 393L1472 400L1472 405L1465 413L1432 428L1383 447L1357 463L1326 476L1306 489L1296 490L1286 490" transform="translate(0,-6.2)"/><path d="M1235 465L1231 464L1228 458L1222 452L1210 444L1195 430L1172 410L1164 396L1161 382L1161 372L1166 368L1175 365L1247 357L1325 351L1340 353L1465 389L1471 393L1472 400L1472 405L1465 413L1432 428L1383 447L1357 463L1326 476L1306 489L1296 490L1286 490" transform="translate(0,-4.7)"/><path d="M1235 465L1231 464L1228 458L1222 452L1210 444L1195 430L1172 410L1164 396L1161 382L1161 372L1166 368L1175 365L1247 357L1325 351L1340 353L1465 389L1471 393L1472 400L1472 405L1465 413L1432 428L1383 447L1357 463L1326 476L1306 489L1296 490L1286 490" transform="translate(0,-3.2)"/><path d="M1235 465L1231 464L1228 458L1222 452L1210 444L1195 430L1172 410L1164 396L1161 382L1161 372L1166 368L1175 365L1247 357L1325 351L1340 353L1465 389L1471 393L1472 400L1472 405L1465 413L1432 428L1383 447L1357 463L1326 476L1306 489L1296 490L1286 490" transform="translate(0,-1.7)"/><path d="M1235 465L1231 464L1228 458L1222 452L1210 444L1195 430L1172 410L1164 396L1161 382L1161 372L1166 368L1175 365L1247 357L1325 351L1340 353L1465 389L1471 393L1472 400L1472 405L1465 413L1432 428L1383 447L1357 463L1326 476L1306 489L1296 490L1286 490" transform="translate(0,-0.2)"/><path d="M1235 465L1231 464L1228 458L1222 452L1210 444L1195 430L1172 410L1164 396L1161 382L1161 372L1166 368L1175 365L1247 357L1325 351L1340 353L1465 389L1471 393L1472 400L1472 405L1465 413L1432 428L1383 447L1357 463L1326 476L1306 489L1296 490L1286 490" transform="translate(0,1.3)"/><path d="M1235 465L1231 464L1228 458L1222 452L1210 444L1195 430L1172 410L1164 396L1161 382L1161 372L1166 368L1175 365L1247 357L1325 351L1340 353L1465 389L1471 393L1472 400L1472 405L1465 413L1432 428L1383 447L1357 463L1326 476L1306 489L1296 490L1286 490" transform="translate(0,2.8)"/><path d="M1235 465L1231 464L1228 458L1222 452L1210 444L1195 430L1172 410L1164 396L1161 382L1161 372L1166 368L1175 365L1247 357L1325 351L1340 353L1465 389L1471 393L1472 400L1472 405L1465 413L1432 428L1383 447L1357 463L1326 476L1306 489L1296 490L1286 490" transform="translate(0,4.3)"/><path d="M1235 465L1231 464L1228 458L1222 452L1210 444L1195 430L1172 410L1164 396L1161 382L1161 372L1166 368L1175 365L1247 357L1325 351L1340 353L1465 389L1471 393L1472 400L1472 405L1465 413L1432 428L1383 447L1357 463L1326 476L1306 489L1296 490L1286 490" transform="translate(0,5.8)"/></g><g fill="none" stroke="#ffe600" stroke-width="7" stroke-linejoin="round" stroke-linecap="butt"><path d="M1285 488L1288 478L1294 470L1305 456L1313 448L1321 444L1325 444" transform="translate(0,-6.2)"/><path d="M1285 488L1288 478L1294 470L1305 456L1313 448L1321 444L1325 444" transform="translate(0,-4.7)"/><path d="M1285 488L1288 478L1294 470L1305 456L1313 448L1321 444L1325 444" transform="translate(0,-3.2)"/><path d="M1285 488L1288 478L1294 470L1305 456L1313 448L1321 444L1325 444" transform="translate(0,-1.7)"/><path d="M1285 488L1288 478L1294 470L1305 456L1313 448L1321 444L1325 444" transform="translate(0,-0.2)"/><path d="M1285 488L1288 478L1294 470L1305 456L1313 448L1321 444L1325 444" transform="translate(0,1.3)"/><path d="M1285 488L1288 478L1294 470L1305 456L1313 448L1321 444L1325 444" transform="translate(0,2.8)"/><path d="M1285 488L1288 478L1294 470L1305 456L1313 448L1321 444L1325 444" transform="translate(0,4.3)"/><path d="M1285 488L1288 478L1294 470L1305 456L1313 448L1321 444L1325 444" transform="translate(0,5.8)"/></g><g fill="none" stroke="#ffe600" stroke-width="7" stroke-linejoin="round" stroke-linecap="butt"><path d="M1285 489L1300 496L1322 502L1327 502" transform="translate(0,-6.4)"/><path d="M1285 489L1300 496L1322 502L1327 502" transform="translate(0,-4.9)"/><path d="M1285 489L1300 496L1322 502L1327 502" transform="translate(0,-3.4)"/><path d="M1285 489L1300 496L1322 502L1327 502" transform="translate(0,-1.9)"/><path d="M1285 489L1300 496L1322 502L1327 502" transform="translate(0,-0.4)"/><path d="M1285 489L1300 496L1322 502L1327 502" transform="translate(0,1.1)"/><path d="M1285 489L1300 496L1322 502L1327 502" transform="translate(0,2.6)"/><path d="M1285 489L1300 496L1322 502L1327 502" transform="translate(0,4.1)"/><path d="M1285 489L1300 496L1322 502L1327 502" transform="translate(0,5.6)"/><path d="M1285 489L1300 496L1322 502L1327 502" transform="translate(0,7.1)"/></g><g fill="none" stroke="#ffe600" stroke-width="8" stroke-linejoin="round" stroke-linecap="butt"><path d="M1259 749L1263 749L1267 744L1270 740L1273 730L1275 722L1274 716L1268 712L1262 711L1240 705L1210 700L1196 699L1183 703L1172 712L1165 722L1156 745L1148 775L1147 805L1152 830L1160 844L1170 853L1182 859L1202 860L1230 855L1243 848L1265 838L1279 836" transform="translate(0,-6.2)"/><path d="M1259 749L1263 749L1267 744L1270 740L1273 730L1275 722L1274 716L1268 712L1262 711L1240 705L1210 700L1196 699L1183 703L1172 712L1165 722L1156 745L1148 775L1147 805L1152 830L1160 844L1170 853L1182 859L1202 860L1230 855L1243 848L1265 838L1279 836" transform="translate(0,-4.7)"/><path d="M1259 749L1263 749L1267 744L1270 740L1273 730L1275 722L1274 716L1268 712L1262 711L1240 705L1210 700L1196 699L1183 703L1172 712L1165 722L1156 745L1148 775L1147 805L1152 830L1160 844L1170 853L1182 859L1202 860L1230 855L1243 848L1265 838L1279 836" transform="translate(0,-3.2)"/><path d="M1259 749L1263 749L1267 744L1270 740L1273 730L1275 722L1274 716L1268 712L1262 711L1240 705L1210 700L1196 699L1183 703L1172 712L1165 722L1156 745L1148 775L1147 805L1152 830L1160 844L1170 853L1182 859L1202 860L1230 855L1243 848L1265 838L1279 836" transform="translate(0,-1.7)"/><path d="M1259 749L1263 749L1267 744L1270 740L1273 730L1275 722L1274 716L1268 712L1262 711L1240 705L1210 700L1196 699L1183 703L1172 712L1165 722L1156 745L1148 775L1147 805L1152 830L1160 844L1170 853L1182 859L1202 860L1230 855L1243 848L1265 838L1279 836" transform="translate(0,-0.2)"/><path d="M1259 749L1263 749L1267 744L1270 740L1273 730L1275 722L1274 716L1268 712L1262 711L1240 705L1210 700L1196 699L1183 703L1172 712L1165 722L1156 745L1148 775L1147 805L1152 830L1160 844L1170 853L1182 859L1202 860L1230 855L1243 848L1265 838L1279 836" transform="translate(0,1.3)"/><path d="M1259 749L1263 749L1267 744L1270 740L1273 730L1275 722L1274 716L1268 712L1262 711L1240 705L1210 700L1196 699L1183 703L1172 712L1165 722L1156 745L1148 775L1147 805L1152 830L1160 844L1170 853L1182 859L1202 860L1230 855L1243 848L1265 838L1279 836" transform="translate(0,2.8)"/><path d="M1259 749L1263 749L1267 744L1270 740L1273 730L1275 722L1274 716L1268 712L1262 711L1240 705L1210 700L1196 699L1183 703L1172 712L1165 722L1156 745L1148 775L1147 805L1152 830L1160 844L1170 853L1182 859L1202 860L1230 855L1243 848L1265 838L1279 836" transform="translate(0,4.3)"/><path d="M1259 749L1263 749L1267 744L1270 740L1273 730L1275 722L1274 716L1268 712L1262 711L1240 705L1210 700L1196 699L1183 703L1172 712L1165 722L1156 745L1148 775L1147 805L1152 830L1160 844L1170 853L1182 859L1202 860L1230 855L1243 848L1265 838L1279 836" transform="translate(0,5.8)"/></g><g fill="none" stroke="#ffe600" stroke-width="7" stroke-linejoin="round" stroke-linecap="butt"><path d="M1220.5 818L1224 818L1242 817L1264 824L1274 832L1279 838" transform="translate(0,-6)"/><path d="M1220.5 818L1224 818L1242 817L1264 824L1274 832L1279 838" transform="translate(0,-4.5)"/><path d="M1220.5 818L1224 818L1242 817L1264 824L1274 832L1279 838" transform="translate(0,-3)"/><path d="M1220.5 818L1224 818L1242 817L1264 824L1274 832L1279 838" transform="translate(0,-1.5)"/><path d="M1220.5 818L1224 818L1242 817L1264 824L1274 832L1279 838" transform="translate(0,0)"/><path d="M1220.5 818L1224 818L1242 817L1264 824L1274 832L1279 838" transform="translate(0,1.5)"/><path d="M1220.5 818L1224 818L1242 817L1264 824L1274 832L1279 838" transform="translate(0,3)"/><path d="M1220.5 818L1224 818L1242 817L1264 824L1274 832L1279 838" transform="translate(0,4.5)"/><path d="M1220.5 818L1224 818L1242 817L1264 824L1274 832L1279 838" transform="translate(0,6)"/></g><g fill="none" stroke="#ffe600" stroke-width="7" stroke-linejoin="round" stroke-linecap="butt"><path d="M1278 842L1270 862L1262 880L1259 886L1255.6 886" transform="translate(0,-6)"/><path d="M1278 842L1270 862L1262 880L1259 886L1255.6 886" transform="translate(0,-4.5)"/><path d="M1278 842L1270 862L1262 880L1259 886L1255.6 886" transform="translate(0,-3)"/><path d="M1278 842L1270 862L1262 880L1259 886L1255.6 886" transform="translate(0,-1.5)"/><path d="M1278 842L1270 862L1262 880L1259 886L1255.6 886" transform="translate(0,0)"/><path d="M1278 842L1270 862L1262 880L1259 886L1255.6 886" transform="translate(0,1.5)"/><path d="M1278 842L1270 862L1262 880L1259 886L1255.6 886" transform="translate(0,3)"/><path d="M1278 842L1270 862L1262 880L1259 886L1255.6 886" transform="translate(0,4.5)"/><path d="M1278 842L1270 862L1262 880L1259 886L1255.6 886" transform="translate(0,6)"/></g></g><defs><linearGradient id="wg" x1="0" y1="0" x2="0" y2="1"><stop offset="0" stop-color="#b9b8b6"/><stop offset="1" stop-color="#a2a19f"/></linearGradient><clipPath id="navc"><circle cx="598.6" cy="125.1" r="37.6"/></clipPath></defs><circle cx="598.6" cy="125.1" r="40" fill="#dcdcda" stroke="#c9c9c7" stroke-width="0.8"/><circle cx="598.6" cy="125.1" r="37.6" fill="#9e9d9b"/><g clip-path="url(#navc)"><polygon points="558.6,85.1 638.6,85.1 624.6,96.6 572.6,96.6" fill="url(#wg)"/><polygon points="558.6,85.1 572.6,99.1 585.6,112.1 558.6,124.1" fill="url(#wg)"/><polygon points="598.6,125.1 598.6,125.1" fill="none"/><polygon points="558.6,124.1 582.6,124.1 586.1,112.6 558.6,85.1" fill="url(#wg)"/><polygon points="638.6,124.1 614.6,124.1 611.1,112.6 638.6,85.1" fill="url(#wg)"/><polygon points="586.1,138.1 611.1,138.1 625.6,152.1 571.6,152.1" fill="url(#wg)"/></g><circle cx="598.6" cy="125.1" r="17" fill="#9e9d9b"/><path d="M586.6 125.1A12 12 0 0 1 610.6 125.1Z" fill="url(#wg)"/><circle cx="598.6" cy="125.4" r="3" fill="#e4e3e1"/><polygon points="598.6,93.1 593.4,102.6 603.8,102.6" fill="#e4e3e1"/><polygon points="598.6,157.6 593.4,148.1 603.8,148.1" fill="#e4e3e1"/><polygon points="566.1,125.1 575.6,119.9 575.6,130.3" fill="#e4e3e1"/><polygon points="631.1,125.1 621.6,119.9 621.6,130.3" fill="#e4e3e1"/><defs><linearGradient id="ov" x1="0" y1="0" x2="0" y2="1"><stop offset="0" stop-color="#a9c35e"/><stop offset="1" stop-color="#e8efb8"/></linearGradient></defs><rect x="1885.5" y="76.8" width="16.6" height="16.8" rx="2.6" fill="url(#ov)" stroke="#1b2b2b" stroke-width="1.2"/><path d="M1886.4 78.5q0-0.9 0.9-0.9h4.2l-0.6 4.6-1.5 3.2-3 .3z" fill="#bfe0f2"/><rect x="1892.6" y="84" width="8.6" height="8.6" fill="#dbe79c" stroke="#0b3a66" stroke-width="1.2"/><rect x="1875" y="397.5" width="26.3" height="295" rx="3.5" fill="#888786" fill-opacity="0.86"/><rect x="1889.3" y="425" width="2" height="241" fill="#737271"/><path d="M1880.5 412a7.6 7 0 0 1 15.2 0z" fill="#9b9a99"/><path d="M1880.5 678a7.6 7 0 0 1 15.2 0z" fill="#9b9a99"/><path d="M1884.3 409.8h7.6M1888.1 406v7.6" stroke="#e6e6e6" stroke-width="1" fill="none"/><path d="M1884 680.5h8.2" stroke="#e6e6e6" stroke-width="1.2" fill="none"/><rect x="1883.3" y="430.5" width="2.2" height="1" fill="#c4c4c3"/><rect x="1883.3" y="442.55" width="2.2" height="1" fill="#c4c4c3"/><rect x="1883.3" y="454.6" width="2.2" height="1" fill="#c4c4c3"/><rect x="1883.3" y="466.65" width="2.2" height="1" fill="#c4c4c3"/><rect x="1883.3" y="478.7" width="2.2" height="1" fill="#c4c4c3"/><rect x="1883.3" y="490.75" width="2.2" height="1" fill="#c4c4c3"/><rect x="1883.3" y="502.8" width="2.2" height="1" fill="#c4c4c3"/><rect x="1883.3" y="514.85" width="2.2" height="1" fill="#c4c4c3"/><rect x="1883.3" y="526.9" width="2.2" height="1" fill="#c4c4c3"/><rect x="1883.3" y="538.95" width="2.2" height="1" fill="#c4c4c3"/><rect x="1883.3" y="551" width="2.2" height="1" fill="#c4c4c3"/><rect x="1883.3" y="563.05" width="2.2" height="1" fill="#c4c4c3"/><rect x="1883.3" y="575.1" width="2.2" height="1" fill="#c4c4c3"/><rect x="1883.3" y="587.15" width="2.2" height="1" fill="#c4c4c3"/><rect x="1883.3" y="599.2" width="2.2" height="1" fill="#c4c4c3"/><rect x="1883.3" y="611.25" width="2.2" height="1" fill="#c4c4c3"/><rect x="1883.3" y="623.3" width="2.2" height="1" fill="#c4c4c3"/><rect x="1883.3" y="635.35" width="2.2" height="1" fill="#c4c4c3"/><rect x="1883.3" y="647.4" width="2.2" height="1" fill="#c4c4c3"/><rect x="1883.3" y="659.45" width="2.2" height="1" fill="#c4c4c3"/><ellipse cx="1890.3" cy="523.5" rx="4.4" ry="8.6" fill="#a9a8a7" stroke="#7a7978" stroke-width="0.8"/><rect x="1837" y="965.3" width="63.6" height="24" rx="3" fill="#8b8b8a" fill-opacity="0.9" stroke="#d5d5d4" stroke-width="1"/><rect x="1839" y="967.3" width="59.6" height="20" rx="2" fill="none" stroke="#777" stroke-width="0.8"/><circle cx="1849.4" cy="977.2" r="6.2" fill="#9c9c9b" stroke="#787878" stroke-width="0.8"/><polygon points="1846.6,975.6 1852.2,975.6 1849.4,980.4" fill="#e2e2e2"/><text x="1863.2" y="980.3" font-size="10.5" fill="#f2f2f2" stroke="#f2f2f2" stroke-width=".25" textLength="31.5" lengthAdjust="spacingAndGlyphs">Layers</text><rect x="551" y="1000" width="112.6" height="13.2" rx="3.5" fill="#565656" stroke="#c9c9c8" stroke-width="1"/><rect x="554" y="1003" width="69.4" height="7" fill="#3e3e3e" stroke="#f5f5f5" stroke-width="0.9"/><rect x="554.5" y="1003.5" width="13.7" height="6" fill="#000"/><rect x="581.9" y="1003.5" width="13.7" height="6" fill="#000"/><rect x="609.3" y="1003.5" width="13.7" height="6" fill="#000"/><text x="630.6" y="1010.6" font-size="10.5" fill="#f4f4f4" textLength="29.5" lengthAdjust="spacingAndGlyphs">2,5 km</text><rect x="1150.5" y="999.5" width="151" height="13.6" rx="3.5" fill="#565656" stroke="#c9c9c8" stroke-width="1"/><text x="1171.8" y="1010.3" font-size="10.5" fill="#f4f4f4" textLength="108" lengthAdjust="spacingAndGlyphs">52,627992°, 13,139783°</text><rect x="1717.8" y="999.6" width="183.4" height="13.6" rx="3.5" fill="#565656" stroke="#c9c9c8" stroke-width="1"/><text x="1722.5" y="1010.4" font-size="10.5" fill="#f4f4f4" textLength="174" lengthAdjust="spacingAndGlyphs">Map © 1987 - 2025 HERE / PTV GmbH</text></svg></body></html>
